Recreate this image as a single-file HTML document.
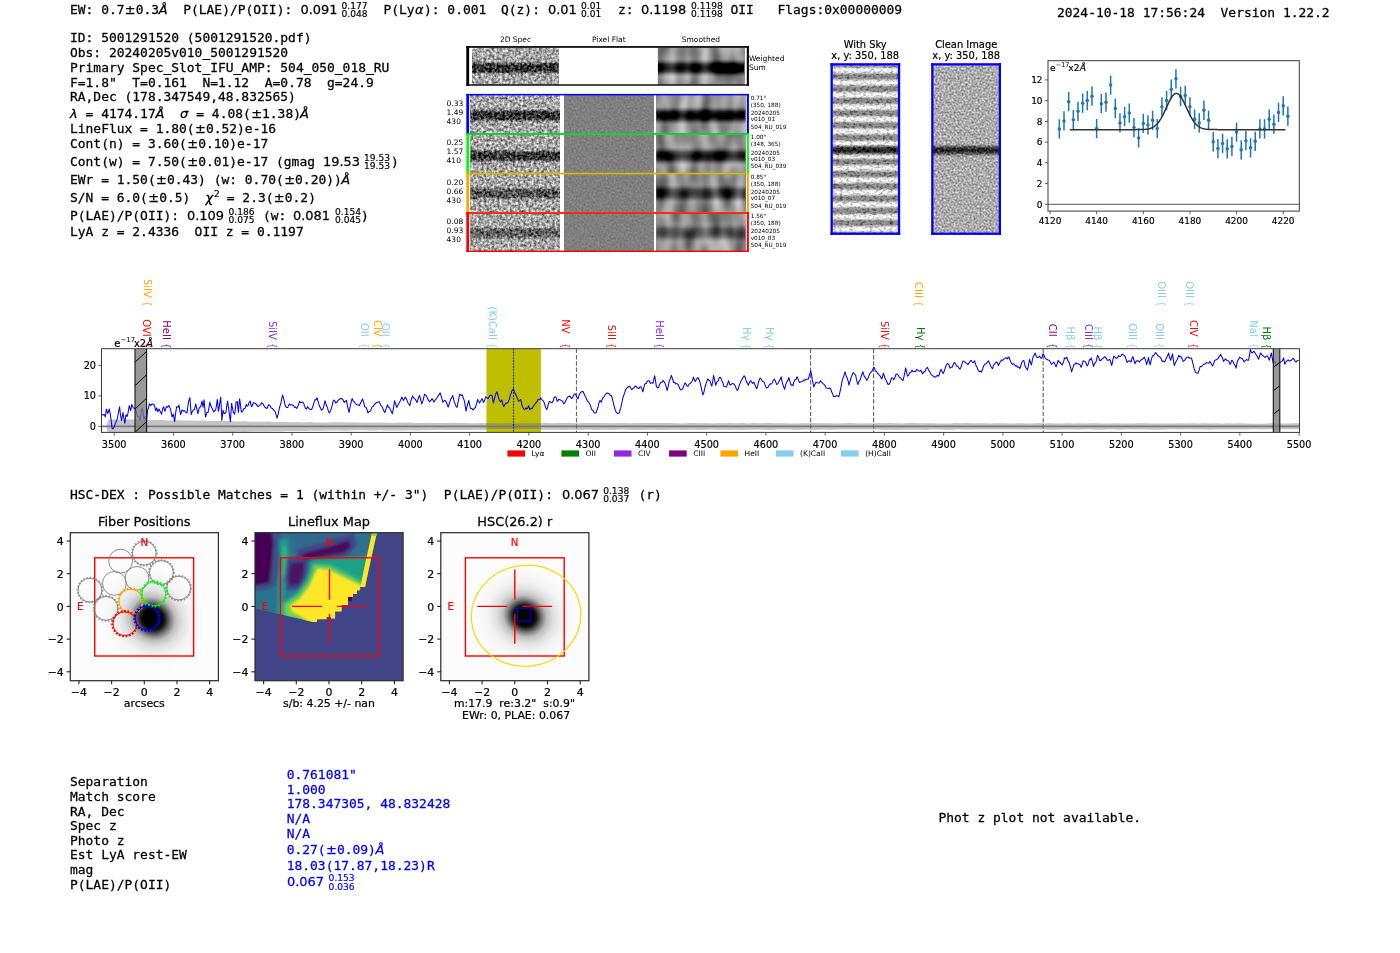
<!DOCTYPE html>
<html lang="en"><head><meta charset="utf-8"><title>HETDEX detection report 5001291520</title>
<style>
html,body{margin:0;padding:0;background:#fff;}
body{width:1400px;height:953px;overflow:hidden;font-family:"DejaVu Sans Mono","Liberation Mono",monospace;}
svg{display:block;will-change:transform;}
text{white-space:pre;}
.m{font-family:"DejaVu Sans Mono","Liberation Mono",monospace;font-size:12.95px;}
.s{font-family:"DejaVu Sans","Liberation Sans",sans-serif;font-size:12.95px;}
.i{font-style:italic;}
</style></head><body>
<svg width="1400" height="953" viewBox="0 0 1400 953" xml:space="preserve">
<text><tspan class="m" x="70.00" y="14.00" stroke="#000" stroke-width="0.26">EW: 0.7</tspan><tspan class="s" x="124.87" y="14.00" stroke="#000" stroke-width="0.26">±</tspan><tspan class="m" x="135.77" y="14.00" stroke="#000" stroke-width="0.26">0.3</tspan><tspan class="s i" x="158.70" y="14.00" stroke="#000" stroke-width="0.26">Å  </tspan><tspan class="m" x="183.20" y="14.00" stroke="#000" stroke-width="0.26">P(LAE)/P(OII): </tspan><tspan class="s" x="300.50" y="14.00" stroke="#000" stroke-width="0.26">0.091</tspan><tspan class="s" x="341.50" y="9.00" style="font-size:9.1px" stroke="#000" stroke-width="0.18">0.177 </tspan><tspan class="s" x="341.50" y="17.20" style="font-size:9.1px" stroke="#000" stroke-width="0.18">0.048  </tspan><tspan class="m" x="383.50" y="14.00" stroke="#000" stroke-width="0.26">P(Ly</tspan><tspan class="s i" x="415.00" y="14.00" stroke="#000" stroke-width="0.26">α</tspan><tspan class="m" x="424.00" y="14.00" stroke="#000" stroke-width="0.26">): 0.001  </tspan><tspan class="m" x="501.00" y="14.00" stroke="#000" stroke-width="0.26">Q(z): </tspan><tspan class="s" x="548.00" y="14.00" stroke="#000" stroke-width="0.26">0.01</tspan><tspan class="s" x="581.00" y="9.00" style="font-size:9.1px" stroke="#000" stroke-width="0.18">0.01 </tspan><tspan class="s" x="581.00" y="17.20" style="font-size:9.1px" stroke="#000" stroke-width="0.18">0.01  </tspan><tspan class="m" x="618.00" y="14.00" stroke="#000" stroke-width="0.26">z: </tspan><tspan class="s" x="641.00" y="14.00" stroke="#000" stroke-width="0.26">0.1198</tspan><tspan class="s" x="691.00" y="9.00" style="font-size:9.1px" stroke="#000" stroke-width="0.18">0.1198 </tspan><tspan class="s" x="691.00" y="17.20" style="font-size:9.1px" stroke="#000" stroke-width="0.18">0.1198 </tspan><tspan class="m" x="730.50" y="14.00" stroke="#000" stroke-width="0.26">OII   </tspan><tspan class="m" x="777.50" y="14.00" stroke="#000" stroke-width="0.26">Flags:0x00000009</tspan></text>
<text class="m" x="1057.00" y="17.00" stroke="#000" stroke-width="0.26">2024-10-18 17:56:24  Version 1.22.2</text>
<text class="m" x="70.00" y="42.30" stroke="#000" stroke-width="0.26">ID: 5001291520 (5001291520.pdf)</text>
<text class="m" x="70.00" y="56.70" stroke="#000" stroke-width="0.26">Obs: 20240205v010_5001291520</text>
<text class="m" x="70.00" y="71.70" stroke="#000" stroke-width="0.26">Primary Spec_Slot_IFU_AMP: 504_050_018_RU</text>
<text class="m" x="70.00" y="86.60" stroke="#000" stroke-width="0.26">F=1.8"  T=0.161  N=1.12  A=0.78  g=24.9</text>
<text class="m" x="70.00" y="101.10" stroke="#000" stroke-width="0.26">RA,Dec (178.347549,48.832565)</text>
<text><tspan class="s i" x="70.00" y="118.00" stroke="#000" stroke-width="0.26">λ</tspan><tspan class="m" x="77.80" y="118.00" stroke="#000" stroke-width="0.26"> = 4174.17</tspan><tspan class="s i" x="155.60" y="118.00" stroke="#000" stroke-width="0.26">Å  </tspan><tspan class="s i" x="180.00" y="118.00" stroke="#000" stroke-width="0.26">σ</tspan><tspan class="m" x="188.50" y="118.00" stroke="#000" stroke-width="0.26"> = 4.08(</tspan><tspan class="s" x="251.17" y="118.00" stroke="#000" stroke-width="0.26">±</tspan><tspan class="m" x="262.06" y="118.00" stroke="#000" stroke-width="0.26">1.38)</tspan><tspan class="s i" x="300.00" y="118.00" stroke="#000" stroke-width="0.26">Å</tspan></text>
<text><tspan class="m" x="70.00" y="133.30" stroke="#000" stroke-width="0.26">LineFlux = 1.80(</tspan><tspan class="s" x="195.03" y="133.30" stroke="#000" stroke-width="0.26">±</tspan><tspan class="m" x="205.93" y="133.30" stroke="#000" stroke-width="0.26">0.52)e-16</tspan></text>
<text><tspan class="m" x="70.00" y="148.00" stroke="#000" stroke-width="0.26">Cont(n) = 3.60(</tspan><tspan class="s" x="187.24" y="148.00" stroke="#000" stroke-width="0.26">±</tspan><tspan class="m" x="198.13" y="148.00" stroke="#000" stroke-width="0.26">0.10)e-17</tspan></text>
<text><tspan class="m" x="70.00" y="166.20" stroke="#000" stroke-width="0.26">Cont(w) = 7.50(</tspan><tspan class="s" x="187.24" y="166.20" stroke="#000" stroke-width="0.26">±</tspan><tspan class="m" x="198.13" y="166.20" stroke="#000" stroke-width="0.26">0.01)e-17 (gmag </tspan><tspan class="s" x="323.00" y="166.20" stroke="#000" stroke-width="0.26">19.53</tspan><tspan class="s" x="364.00" y="161.20" style="font-size:9.1px" stroke="#000" stroke-width="0.18">19.53 </tspan><tspan class="s" x="364.00" y="169.40" style="font-size:9.1px" stroke="#000" stroke-width="0.18">19.53</tspan><tspan class="m" x="391.00" y="166.20" stroke="#000" stroke-width="0.26">)</tspan></text>
<text><tspan class="m" x="70.00" y="184.40" stroke="#000" stroke-width="0.26">EWr = 1.50(</tspan><tspan class="s" x="156.05" y="184.40" stroke="#000" stroke-width="0.26">±</tspan><tspan class="m" x="166.95" y="184.40" stroke="#000" stroke-width="0.26">0.43) (w: 0.70(</tspan><tspan class="s" x="284.19" y="184.40" stroke="#000" stroke-width="0.26">±</tspan><tspan class="m" x="295.09" y="184.40" stroke="#000" stroke-width="0.26">0.20))</tspan><tspan class="s i" x="341.20" y="184.40" stroke="#000" stroke-width="0.26">Å</tspan></text>
<text><tspan class="m" x="70.00" y="202.00" stroke="#000" stroke-width="0.26">S/N = 6.0(</tspan><tspan class="s" x="148.26" y="202.00" stroke="#000" stroke-width="0.26">±</tspan><tspan class="m" x="159.15" y="202.00" stroke="#000" stroke-width="0.26">0.5)  </tspan><tspan class="s i" x="205.60" y="202.00" stroke="#000" stroke-width="0.26">χ</tspan><tspan class="s" x="214.00" y="197.00" style="font-size:9.1px" stroke="#000" stroke-width="0.18">2</tspan><tspan class="m" x="219.00" y="202.00" stroke="#000" stroke-width="0.26"> = 2.3(</tspan><tspan class="s" x="273.87" y="202.00" stroke="#000" stroke-width="0.26">±</tspan><tspan class="m" x="284.77" y="202.00" stroke="#000" stroke-width="0.26">0.2)</tspan></text>
<text><tspan class="m" x="70.00" y="219.60" stroke="#000" stroke-width="0.26">P(LAE)/P(OII): </tspan><tspan class="s" x="187.00" y="219.60" stroke="#000" stroke-width="0.26">0.109</tspan><tspan class="s" x="228.50" y="214.60" style="font-size:9.1px" stroke="#000" stroke-width="0.18">0.186 </tspan><tspan class="s" x="228.50" y="222.80" style="font-size:9.1px" stroke="#000" stroke-width="0.18">0.075 </tspan><tspan class="m" x="263.00" y="219.60" stroke="#000" stroke-width="0.26">(w: </tspan><tspan class="s" x="293.00" y="219.60" stroke="#000" stroke-width="0.26">0.081</tspan><tspan class="s" x="335.00" y="214.60" style="font-size:9.1px" stroke="#000" stroke-width="0.18">0.154 </tspan><tspan class="s" x="335.00" y="222.80" style="font-size:9.1px" stroke="#000" stroke-width="0.18">0.045</tspan><tspan class="m" x="361.00" y="219.60" stroke="#000" stroke-width="0.26">)</tspan></text>
<text class="m" x="70.00" y="236.00" stroke="#000" stroke-width="0.26">LyA z = 2.4336  OII z = 0.1197</text>
<defs>
<filter id="fn0" x="0" y="0" width="100%" height="100%" color-interpolation-filters="sRGB"><feTurbulence type="fractalNoise" baseFrequency="0.38 0.38" numOctaves="2" seed="3"/><feColorMatrix type="matrix" values="1.15 0 0 0 0.075  1.15 0 0 0 0.075  1.15 0 0 0 0.075  0 0 0 0 1" result="n"/><feComposite in="n" in2="SourceGraphic" operator="arithmetic" k1="0" k2="1" k3="1" k4="-1"/></filter>
<filter id="fn1" x="0" y="0" width="100%" height="100%" color-interpolation-filters="sRGB"><feTurbulence type="fractalNoise" baseFrequency="0.38 0.38" numOctaves="2" seed="11"/><feColorMatrix type="matrix" values="1.15 0 0 0 0.075  1.15 0 0 0 0.075  1.15 0 0 0 0.075  0 0 0 0 1" result="n"/><feComposite in="n" in2="SourceGraphic" operator="arithmetic" k1="0" k2="1" k3="1" k4="-1"/></filter>
<filter id="fn2" x="0" y="0" width="100%" height="100%" color-interpolation-filters="sRGB"><feTurbulence type="fractalNoise" baseFrequency="0.38 0.38" numOctaves="2" seed="17"/><feColorMatrix type="matrix" values="1.15 0 0 0 0.075  1.15 0 0 0 0.075  1.15 0 0 0 0.075  0 0 0 0 1" result="n"/><feComposite in="n" in2="SourceGraphic" operator="arithmetic" k1="0" k2="1" k3="1" k4="-1"/></filter>
<filter id="fn3" x="0" y="0" width="100%" height="100%" color-interpolation-filters="sRGB"><feTurbulence type="fractalNoise" baseFrequency="0.38 0.38" numOctaves="2" seed="23"/><feColorMatrix type="matrix" values="1.15 0 0 0 0.075  1.15 0 0 0 0.075  1.15 0 0 0 0.075  0 0 0 0 1" result="n"/><feComposite in="n" in2="SourceGraphic" operator="arithmetic" k1="0" k2="1" k3="1" k4="-1"/></filter>
<filter id="fn4" x="0" y="0" width="100%" height="100%" color-interpolation-filters="sRGB"><feTurbulence type="fractalNoise" baseFrequency="0.38 0.38" numOctaves="2" seed="29"/><feColorMatrix type="matrix" values="1.15 0 0 0 0.075  1.15 0 0 0 0.075  1.15 0 0 0 0.075  0 0 0 0 1" result="n"/><feComposite in="n" in2="SourceGraphic" operator="arithmetic" k1="0" k2="1" k3="1" k4="-1"/></filter>
<filter id="fs0" x="0" y="0" width="100%" height="100%" color-interpolation-filters="sRGB"><feTurbulence type="fractalNoise" baseFrequency="0.09 0.035" numOctaves="1" seed="5"/><feColorMatrix type="matrix" values="0.85 0 0 0 0.15  0.85 0 0 0 0.15  0.85 0 0 0 0.15  0 0 0 0 1" result="n"/><feComposite in="n" in2="SourceGraphic" operator="arithmetic" k1="0" k2="1" k3="1" k4="-1"/></filter>
<filter id="fs1" x="0" y="0" width="100%" height="100%" color-interpolation-filters="sRGB"><feTurbulence type="fractalNoise" baseFrequency="0.09 0.035" numOctaves="1" seed="8"/><feColorMatrix type="matrix" values="0.85 0 0 0 0.15  0.85 0 0 0 0.15  0.85 0 0 0 0.15  0 0 0 0 1" result="n"/><feComposite in="n" in2="SourceGraphic" operator="arithmetic" k1="0" k2="1" k3="1" k4="-1"/></filter>
<filter id="fs2" x="0" y="0" width="100%" height="100%" color-interpolation-filters="sRGB"><feTurbulence type="fractalNoise" baseFrequency="0.09 0.035" numOctaves="1" seed="13"/><feColorMatrix type="matrix" values="0.85 0 0 0 0.15  0.85 0 0 0 0.15  0.85 0 0 0 0.15  0 0 0 0 1" result="n"/><feComposite in="n" in2="SourceGraphic" operator="arithmetic" k1="0" k2="1" k3="1" k4="-1"/></filter>
<filter id="fs3" x="0" y="0" width="100%" height="100%" color-interpolation-filters="sRGB"><feTurbulence type="fractalNoise" baseFrequency="0.09 0.035" numOctaves="1" seed="19"/><feColorMatrix type="matrix" values="0.85 0 0 0 0.15  0.85 0 0 0 0.15  0.85 0 0 0 0.15  0 0 0 0 1" result="n"/><feComposite in="n" in2="SourceGraphic" operator="arithmetic" k1="0" k2="1" k3="1" k4="-1"/></filter>
<filter id="fs4" x="0" y="0" width="100%" height="100%" color-interpolation-filters="sRGB"><feTurbulence type="fractalNoise" baseFrequency="0.09 0.035" numOctaves="1" seed="27"/><feColorMatrix type="matrix" values="0.85 0 0 0 0.15  0.85 0 0 0 0.15  0.85 0 0 0 0.15  0 0 0 0 1" result="n"/><feComposite in="n" in2="SourceGraphic" operator="arithmetic" k1="0" k2="1" k3="1" k4="-1"/></filter>
<filter id="ff" x="0" y="0" width="100%" height="100%" color-interpolation-filters="sRGB"><feTurbulence type="fractalNoise" baseFrequency="0.5 0.5" numOctaves="1" seed="7"/><feColorMatrix type="matrix" values="0.22 0 0 0 0.39  0.22 0 0 0 0.39  0.22 0 0 0 0.39  0 0 0 0 1" result="n"/><feComposite in="n" in2="SourceGraphic" operator="arithmetic" k1="0" k2="1" k3="1" k4="-1"/></filter>
<filter id="fc" x="0" y="0" width="100%" height="100%" color-interpolation-filters="sRGB"><feTurbulence type="fractalNoise" baseFrequency="0.5 0.5" numOctaves="2" seed="21"/><feColorMatrix type="matrix" values="0.75 0 0 0 0.3  0.75 0 0 0 0.3  0.75 0 0 0 0.3  0 0 0 0 1" result="n"/><feComposite in="n" in2="SourceGraphic" operator="arithmetic" k1="0" k2="1" k3="1" k4="-1"/></filter>
<filter id="fk" x="0" y="0" width="100%" height="100%" color-interpolation-filters="sRGB"><feTurbulence type="fractalNoise" baseFrequency="0.3 0.45" numOctaves="2" seed="31"/><feColorMatrix type="matrix" values="0.9 0 0 0 0.5  0.9 0 0 0 0.5  0.9 0 0 0 0.5  0 0 0 0 1" result="n"/><feComposite in="n" in2="SourceGraphic" operator="arithmetic" k1="0" k2="1" k3="1" k4="-1"/></filter>
</defs>
<text class="s" x="515.50" y="41.90" text-anchor="middle" style="font-size:7.5px">2D Spec</text>
<text class="s" x="608.80" y="41.90" text-anchor="middle" style="font-size:7.5px">Pixel Flat</text>
<text class="s" x="700.90" y="41.90" text-anchor="middle" style="font-size:7.5px">Smoothed</text>
<linearGradient id="bg1" x1="0" y1="0" x2="0" y2="1"><stop offset="0.362" stop-color="#ffffff"/><stop offset="0.395" stop-color="#e2e2e2"/><stop offset="0.440" stop-color="#a1a1a1"/><stop offset="0.482" stop-color="#8a8a8a"/><stop offset="0.614" stop-color="#8a8a8a"/><stop offset="0.656" stop-color="#a1a1a1"/><stop offset="0.701" stop-color="#e2e2e2"/><stop offset="0.734" stop-color="#ffffff"/></linearGradient>
<rect x="472.00" y="47.90" width="86.70" height="36.50" fill="url(#bg1)" filter="url(#fn0)"/>
<linearGradient id="bg2" x1="0" y1="0" x2="0" y2="1"><stop offset="0.301" stop-color="#ffffff"/><stop offset="0.365" stop-color="#d5d5d5"/><stop offset="0.451" stop-color="#787878"/><stop offset="0.532" stop-color="#575757"/><stop offset="0.564" stop-color="#575757"/><stop offset="0.645" stop-color="#787878"/><stop offset="0.731" stop-color="#d5d5d5"/><stop offset="0.795" stop-color="#ffffff"/></linearGradient>
<rect x="657.90" y="47.90" width="86.70" height="36.50" fill="url(#bg2)" filter="url(#fs0)"/>
<rect x="466.30" y="46.10" width="2.80" height="39.60" fill="#000"/>
<rect x="746.80" y="46.10" width="2.10" height="39.60" fill="#000"/>
<rect x="466.30" y="46.10" width="282.60" height="1.70" fill="#000"/>
<rect x="466.30" y="84.30" width="282.60" height="1.40" fill="#000"/>
<text class="s" x="748.90" y="60.70" style="font-size:7.5px">Weighted</text>
<text class="s" x="748.90" y="69.80" style="font-size:7.5px">Sum</text>
<linearGradient id="bg3" x1="0" y1="0" x2="0" y2="1"><stop offset="0.355" stop-color="#ffffff"/><stop offset="0.387" stop-color="#e2e2e2"/><stop offset="0.430" stop-color="#a1a1a1"/><stop offset="0.470" stop-color="#8a8a8a"/><stop offset="0.597" stop-color="#8a8a8a"/><stop offset="0.637" stop-color="#a1a1a1"/><stop offset="0.680" stop-color="#e2e2e2"/><stop offset="0.712" stop-color="#ffffff"/></linearGradient>
<rect x="470.40" y="95.10" width="89.60" height="38.05" fill="url(#bg3)" filter="url(#fn1)"/>
<rect x="564.00" y="95.10" width="89.80" height="38.05" fill="#fff" filter="url(#ff)"/>
<linearGradient id="bg4" x1="0" y1="0" x2="0" y2="1"><stop offset="0.297" stop-color="#ffffff"/><stop offset="0.358" stop-color="#d7d7d7"/><stop offset="0.440" stop-color="#818181"/><stop offset="0.518" stop-color="#616161"/><stop offset="0.549" stop-color="#616161"/><stop offset="0.627" stop-color="#818181"/><stop offset="0.709" stop-color="#d7d7d7"/><stop offset="0.770" stop-color="#ffffff"/></linearGradient>
<rect x="656.20" y="95.10" width="89.40" height="38.05" fill="url(#bg4)" filter="url(#fs1)"/>
<linearGradient id="bg5" x1="0" y1="0" x2="0" y2="1"><stop offset="0.385" stop-color="#ffffff"/><stop offset="0.417" stop-color="#e3e3e3"/><stop offset="0.460" stop-color="#a5a5a5"/><stop offset="0.501" stop-color="#8f8f8f"/><stop offset="0.627" stop-color="#8f8f8f"/><stop offset="0.667" stop-color="#a5a5a5"/><stop offset="0.711" stop-color="#e3e3e3"/><stop offset="0.742" stop-color="#ffffff"/></linearGradient>
<rect x="470.40" y="134.55" width="89.60" height="38.05" fill="url(#bg5)" filter="url(#fn2)"/>
<rect x="564.00" y="134.55" width="89.80" height="38.05" fill="#fff" filter="url(#ff)"/>
<linearGradient id="bg6" x1="0" y1="0" x2="0" y2="1"><stop offset="0.327" stop-color="#ffffff"/><stop offset="0.388" stop-color="#dbdbdb"/><stop offset="0.471" stop-color="#8d8d8d"/><stop offset="0.548" stop-color="#707070"/><stop offset="0.580" stop-color="#707070"/><stop offset="0.657" stop-color="#8d8d8d"/><stop offset="0.740" stop-color="#dbdbdb"/><stop offset="0.800" stop-color="#ffffff"/></linearGradient>
<rect x="656.20" y="134.55" width="89.40" height="38.05" fill="url(#bg6)" filter="url(#fs2)"/>
<linearGradient id="bg7" x1="0" y1="0" x2="0" y2="1"><stop offset="0.334" stop-color="#ffffff"/><stop offset="0.366" stop-color="#eaeaea"/><stop offset="0.409" stop-color="#bcbcbc"/><stop offset="0.449" stop-color="#ababab"/><stop offset="0.576" stop-color="#ababab"/><stop offset="0.616" stop-color="#bcbcbc"/><stop offset="0.659" stop-color="#eaeaea"/><stop offset="0.691" stop-color="#ffffff"/></linearGradient>
<rect x="470.40" y="174.00" width="89.60" height="38.05" fill="url(#bg7)" filter="url(#fn3)"/>
<rect x="564.00" y="174.00" width="89.80" height="38.05" fill="#fff" filter="url(#ff)"/>
<linearGradient id="bg8" x1="0" y1="0" x2="0" y2="1"><stop offset="0.276" stop-color="#ffffff"/><stop offset="0.337" stop-color="#e6e6e6"/><stop offset="0.419" stop-color="#adadad"/><stop offset="0.497" stop-color="#999999"/><stop offset="0.528" stop-color="#999999"/><stop offset="0.606" stop-color="#adadad"/><stop offset="0.688" stop-color="#e6e6e6"/><stop offset="0.749" stop-color="#ffffff"/></linearGradient>
<rect x="656.20" y="174.00" width="89.40" height="38.05" fill="url(#bg8)" filter="url(#fs3)"/>
<linearGradient id="bg9" x1="0" y1="0" x2="0" y2="1"><stop offset="0.335" stop-color="#ffffff"/><stop offset="0.367" stop-color="#eeeeee"/><stop offset="0.410" stop-color="#c8c8c8"/><stop offset="0.451" stop-color="#bababa"/><stop offset="0.577" stop-color="#bababa"/><stop offset="0.617" stop-color="#c8c8c8"/><stop offset="0.661" stop-color="#eeeeee"/><stop offset="0.693" stop-color="#ffffff"/></linearGradient>
<rect x="470.40" y="213.45" width="89.60" height="38.05" fill="url(#bg9)" filter="url(#fn4)"/>
<rect x="564.00" y="213.45" width="89.80" height="38.05" fill="#fff" filter="url(#ff)"/>
<linearGradient id="bg10" x1="0" y1="0" x2="0" y2="1"><stop offset="0.277" stop-color="#ffffff"/><stop offset="0.338" stop-color="#ececec"/><stop offset="0.421" stop-color="#c2c2c2"/><stop offset="0.498" stop-color="#b2b2b2"/><stop offset="0.530" stop-color="#b2b2b2"/><stop offset="0.607" stop-color="#c2c2c2"/><stop offset="0.690" stop-color="#ececec"/><stop offset="0.750" stop-color="#ffffff"/></linearGradient>
<rect x="656.20" y="213.45" width="89.40" height="38.05" fill="url(#bg10)" filter="url(#fs4)"/>
<rect x="466.30" y="93.90" width="2.80" height="40.85" fill="#0000ff"/>
<rect x="746.80" y="93.90" width="2.10" height="40.85" fill="#0000ff"/>
<rect x="466.30" y="93.90" width="282.60" height="1.50" fill="#0000ff"/>
<rect x="466.30" y="133.35" width="282.60" height="1.40" fill="#0000ff"/>
<text class="s" x="446.60" y="105.60" style="font-size:7.5px">0.33</text>
<text class="s" x="446.60" y="114.60" style="font-size:7.5px">1.49</text>
<text class="s" x="446.60" y="123.60" style="font-size:7.5px">430</text>
<text class="s" x="750.70" y="99.60" style="font-size:5.72px">0.71"</text>
<text class="s" x="750.70" y="106.80" style="font-size:5.72px">(350, 188)</text>
<text class="s" x="750.70" y="115.10" style="font-size:5.72px">20240205</text>
<text class="s" x="750.70" y="121.40" style="font-size:5.72px">v010_01</text>
<text class="s" x="750.70" y="128.90" style="font-size:5.72px">504_RU_019</text>
<rect x="466.30" y="133.35" width="2.80" height="40.85" fill="#00ff00"/>
<rect x="746.80" y="133.35" width="2.10" height="40.85" fill="#00ff00"/>
<rect x="466.30" y="133.35" width="282.60" height="1.50" fill="#00ff00"/>
<rect x="466.30" y="172.80" width="282.60" height="1.40" fill="#00ff00"/>
<text class="s" x="446.60" y="145.05" style="font-size:7.5px">0.25</text>
<text class="s" x="446.60" y="154.05" style="font-size:7.5px">1.57</text>
<text class="s" x="446.60" y="163.05" style="font-size:7.5px">410</text>
<text class="s" x="750.70" y="139.05" style="font-size:5.72px">1.00"</text>
<text class="s" x="750.70" y="146.25" style="font-size:5.72px">(348, 365)</text>
<text class="s" x="750.70" y="154.55" style="font-size:5.72px">20240205</text>
<text class="s" x="750.70" y="160.85" style="font-size:5.72px">v010_03</text>
<text class="s" x="750.70" y="168.35" style="font-size:5.72px">504_RU_039</text>
<rect x="466.30" y="172.80" width="2.80" height="40.85" fill="#ffa500"/>
<rect x="746.80" y="172.80" width="2.10" height="40.85" fill="#ffa500"/>
<rect x="466.30" y="172.80" width="282.60" height="1.50" fill="#ffa500"/>
<rect x="466.30" y="212.25" width="282.60" height="1.40" fill="#ffa500"/>
<text class="s" x="446.60" y="184.50" style="font-size:7.5px">0.20</text>
<text class="s" x="446.60" y="193.50" style="font-size:7.5px">0.66</text>
<text class="s" x="446.60" y="202.50" style="font-size:7.5px">430</text>
<text class="s" x="750.70" y="178.50" style="font-size:5.72px">0.85"</text>
<text class="s" x="750.70" y="185.70" style="font-size:5.72px">(350, 188)</text>
<text class="s" x="750.70" y="194.00" style="font-size:5.72px">20240205</text>
<text class="s" x="750.70" y="200.30" style="font-size:5.72px">v010_07</text>
<text class="s" x="750.70" y="207.80" style="font-size:5.72px">504_RU_019</text>
<rect x="466.30" y="212.25" width="2.80" height="39.75" fill="#ff0000"/>
<rect x="746.80" y="212.25" width="2.10" height="39.75" fill="#ff0000"/>
<rect x="466.30" y="212.25" width="282.60" height="1.50" fill="#ff0000"/>
<rect x="466.30" y="250.60" width="282.60" height="1.40" fill="#ff0000"/>
<text class="s" x="446.60" y="223.95" style="font-size:7.5px">0.08</text>
<text class="s" x="446.60" y="232.95" style="font-size:7.5px">0.93</text>
<text class="s" x="446.60" y="241.95" style="font-size:7.5px">430</text>
<text class="s" x="750.70" y="217.95" style="font-size:5.72px">1.56"</text>
<text class="s" x="750.70" y="225.15" style="font-size:5.72px">(350, 188)</text>
<text class="s" x="750.70" y="233.45" style="font-size:5.72px">20240205</text>
<text class="s" x="750.70" y="239.75" style="font-size:5.72px">v010_03</text>
<text class="s" x="750.70" y="247.25" style="font-size:5.72px">504_RU_019</text>
<text class="s" x="865.20" y="47.80" text-anchor="middle" style="font-size:9.9px" stroke="#000" stroke-width="0.20">With Sky</text>
<text class="s" x="865.20" y="58.70" text-anchor="middle" style="font-size:9.9px" stroke="#000" stroke-width="0.20">x, y: 350, 188</text>
<text class="s" x="966.20" y="47.80" text-anchor="middle" style="font-size:9.9px" stroke="#000" stroke-width="0.20">Clean Image</text>
<text class="s" x="966.20" y="58.70" text-anchor="middle" style="font-size:9.9px" stroke="#000" stroke-width="0.20">x, y: 350, 188</text>
<linearGradient id="stripe" gradientUnits="userSpaceOnUse" x1="0" y1="70.40" x2="0" y2="82.60" spreadMethod="repeat"><stop offset="0" stop-color="#fff"/><stop offset="0.14" stop-color="#f4f4f4"/><stop offset="0.36" stop-color="#949494"/><stop offset="0.64" stop-color="#949494"/><stop offset="0.86" stop-color="#f4f4f4"/><stop offset="1" stop-color="#fff"/></linearGradient>
<linearGradient id="eband" x1="0" y1="0" x2="0" y2="1"><stop offset="0" stop-color="#000" stop-opacity="0"/><stop offset="0.3" stop-color="#000" stop-opacity="0.55"/><stop offset="0.5" stop-color="#000" stop-opacity="0.7"/><stop offset="0.7" stop-color="#000" stop-opacity="0.55"/><stop offset="1" stop-color="#000" stop-opacity="0"/></linearGradient>
<g filter="url(#fk)">
<rect x="832.50" y="65.30" width="65.70" height="167.70" fill="url(#stripe)"/>
<rect x="832.50" y="144.30" width="65.70" height="12.00" fill="url(#eband)"/>
</g>
<rect x="830.50" y="63.20" width="2.30" height="171.70" fill="#0000ff"/>
<rect x="897.90" y="63.20" width="2.30" height="171.70" fill="#0000ff"/>
<rect x="830.50" y="63.20" width="69.70" height="2.30" fill="#0000ff"/>
<rect x="830.50" y="232.60" width="69.70" height="2.30" fill="#0000ff"/>
<g filter="url(#fc)">
<rect x="933.00" y="65.30" width="66.20" height="167.70" fill="#fff"/>
<rect x="933.00" y="144.30" width="66.20" height="12.00" fill="url(#eband)" opacity="0.8"/>
</g>
<rect x="931.20" y="63.20" width="2.30" height="171.70" fill="#0000ff"/>
<rect x="998.70" y="63.20" width="2.30" height="171.70" fill="#0000ff"/>
<rect x="931.20" y="63.20" width="69.80" height="2.30" fill="#0000ff"/>
<rect x="931.20" y="232.60" width="69.80" height="2.30" fill="#0000ff"/>
<rect x="1048.00" y="60.70" width="251.30" height="150.40" fill="#fff" stroke="none"/>
<line x1="1048.00" y1="204.30" x2="1299.30" y2="204.30" stroke="#555" stroke-width="1"/>
<path d="M1059.33 119.27V138.55M1063.99 111.28V130.57M1068.66 91.99V111.28M1073.32 110.04V129.32M1077.98 101.64V120.93M1082.65 93.55V112.84M1087.31 90.96V110.24M1091.98 86.50V105.79M1096.64 118.95V138.24M1101.30 94.07V113.36M1105.97 92.51V111.80M1110.63 75.40V94.69M1115.30 98.84V118.13M1119.96 113.25V132.54M1124.62 107.03V126.32M1129.29 103.40V122.69M1133.95 117.92V137.21M1138.62 128.29V147.58M1143.28 113.77V133.06M1147.94 115.33V134.61M1152.61 110.66V129.95M1157.27 118.95V138.24M1161.94 97.18V116.47M1166.60 90.96V110.24M1171.26 79.55V98.84M1175.93 69.18V88.47M1180.59 86.81V106.10M1185.26 85.77V105.06M1189.92 97.18V116.47M1194.58 109.62V128.91M1199.25 113.25V132.54M1203.91 100.60V119.89M1208.58 110.66V129.95M1213.24 132.12V151.41M1217.90 138.97V158.26M1222.57 133.78V153.07M1227.23 139.18V158.46M1231.90 136.79V156.08M1236.56 122.48V141.77M1241.22 140.21V159.50M1245.89 130.98V150.27M1250.55 138.14V157.43M1255.22 131.71V151.00M1259.88 119.27V138.55M1264.54 119.27V138.55M1269.21 109.62V128.91M1273.87 114.50V133.78M1278.54 102.78V122.07M1283.20 96.14V115.43M1287.86 106.51V125.80" stroke="#1f77b4" stroke-width="1.5" fill="none"/>
<circle cx="1059.33" cy="128.91" r="1.75" fill="#1f77b4"/>
<circle cx="1063.99" cy="120.93" r="1.75" fill="#1f77b4"/>
<circle cx="1068.66" cy="101.64" r="1.75" fill="#1f77b4"/>
<circle cx="1073.32" cy="119.68" r="1.75" fill="#1f77b4"/>
<circle cx="1077.98" cy="111.28" r="1.75" fill="#1f77b4"/>
<circle cx="1082.65" cy="103.19" r="1.75" fill="#1f77b4"/>
<circle cx="1087.31" cy="100.60" r="1.75" fill="#1f77b4"/>
<circle cx="1091.98" cy="96.14" r="1.75" fill="#1f77b4"/>
<circle cx="1096.64" cy="128.60" r="1.75" fill="#1f77b4"/>
<circle cx="1101.30" cy="103.71" r="1.75" fill="#1f77b4"/>
<circle cx="1105.97" cy="102.16" r="1.75" fill="#1f77b4"/>
<circle cx="1110.63" cy="85.05" r="1.75" fill="#1f77b4"/>
<circle cx="1115.30" cy="108.48" r="1.75" fill="#1f77b4"/>
<circle cx="1119.96" cy="122.90" r="1.75" fill="#1f77b4"/>
<circle cx="1124.62" cy="116.67" r="1.75" fill="#1f77b4"/>
<circle cx="1129.29" cy="113.04" r="1.75" fill="#1f77b4"/>
<circle cx="1133.95" cy="127.56" r="1.75" fill="#1f77b4"/>
<circle cx="1138.62" cy="137.93" r="1.75" fill="#1f77b4"/>
<circle cx="1143.28" cy="123.41" r="1.75" fill="#1f77b4"/>
<circle cx="1147.94" cy="124.97" r="1.75" fill="#1f77b4"/>
<circle cx="1152.61" cy="120.30" r="1.75" fill="#1f77b4"/>
<circle cx="1157.27" cy="128.60" r="1.75" fill="#1f77b4"/>
<circle cx="1161.94" cy="106.82" r="1.75" fill="#1f77b4"/>
<circle cx="1166.60" cy="100.60" r="1.75" fill="#1f77b4"/>
<circle cx="1171.26" cy="89.19" r="1.75" fill="#1f77b4"/>
<circle cx="1175.93" cy="78.82" r="1.75" fill="#1f77b4"/>
<circle cx="1180.59" cy="96.45" r="1.75" fill="#1f77b4"/>
<circle cx="1185.26" cy="95.42" r="1.75" fill="#1f77b4"/>
<circle cx="1189.92" cy="106.82" r="1.75" fill="#1f77b4"/>
<circle cx="1194.58" cy="119.27" r="1.75" fill="#1f77b4"/>
<circle cx="1199.25" cy="122.90" r="1.75" fill="#1f77b4"/>
<circle cx="1203.91" cy="110.24" r="1.75" fill="#1f77b4"/>
<circle cx="1208.58" cy="120.30" r="1.75" fill="#1f77b4"/>
<circle cx="1213.24" cy="141.77" r="1.75" fill="#1f77b4"/>
<circle cx="1217.90" cy="148.61" r="1.75" fill="#1f77b4"/>
<circle cx="1222.57" cy="143.43" r="1.75" fill="#1f77b4"/>
<circle cx="1227.23" cy="148.82" r="1.75" fill="#1f77b4"/>
<circle cx="1231.90" cy="146.44" r="1.75" fill="#1f77b4"/>
<circle cx="1236.56" cy="132.12" r="1.75" fill="#1f77b4"/>
<circle cx="1241.22" cy="149.86" r="1.75" fill="#1f77b4"/>
<circle cx="1245.89" cy="140.63" r="1.75" fill="#1f77b4"/>
<circle cx="1250.55" cy="147.78" r="1.75" fill="#1f77b4"/>
<circle cx="1255.22" cy="141.35" r="1.75" fill="#1f77b4"/>
<circle cx="1259.88" cy="128.91" r="1.75" fill="#1f77b4"/>
<circle cx="1264.54" cy="128.91" r="1.75" fill="#1f77b4"/>
<circle cx="1269.21" cy="119.27" r="1.75" fill="#1f77b4"/>
<circle cx="1273.87" cy="124.14" r="1.75" fill="#1f77b4"/>
<circle cx="1278.54" cy="112.42" r="1.75" fill="#1f77b4"/>
<circle cx="1283.20" cy="105.79" r="1.75" fill="#1f77b4"/>
<circle cx="1287.86" cy="116.16" r="1.75" fill="#1f77b4"/>
<path d="M1069.82 129.64L1070.99 129.64L1072.15 129.64L1073.32 129.64L1074.49 129.64L1075.65 129.64L1076.82 129.64L1077.98 129.64L1079.15 129.64L1080.32 129.64L1081.48 129.64L1082.65 129.64L1083.81 129.64L1084.98 129.64L1086.15 129.64L1087.31 129.64L1088.48 129.64L1089.64 129.64L1090.81 129.64L1091.98 129.64L1093.14 129.64L1094.31 129.64L1095.47 129.64L1096.64 129.64L1097.81 129.64L1098.97 129.64L1100.14 129.64L1101.30 129.64L1102.47 129.64L1103.64 129.64L1104.80 129.64L1105.97 129.64L1107.13 129.64L1108.30 129.64L1109.47 129.64L1110.63 129.64L1111.80 129.64L1112.96 129.64L1114.13 129.64L1115.30 129.64L1116.46 129.64L1117.63 129.64L1118.79 129.64L1119.96 129.64L1121.13 129.64L1122.29 129.64L1123.46 129.64L1124.62 129.64L1125.79 129.64L1126.96 129.64L1128.12 129.64L1129.29 129.64L1130.45 129.63L1131.62 129.63L1132.79 129.63L1133.95 129.63L1135.12 129.63L1136.28 129.62L1137.45 129.62L1138.62 129.61L1139.78 129.59L1140.95 129.57L1142.11 129.53L1143.28 129.48L1144.45 129.41L1145.61 129.31L1146.78 129.17L1147.94 128.99L1149.11 128.74L1150.28 128.42L1151.44 127.99L1152.61 127.46L1153.77 126.79L1154.94 125.96L1156.11 124.95L1157.27 123.75L1158.44 122.33L1159.60 120.70L1160.77 118.86L1161.94 116.80L1163.10 114.56L1164.27 112.17L1165.43 109.66L1166.60 107.11L1167.77 104.57L1168.93 102.12L1170.10 99.83L1171.26 97.79L1172.43 96.07L1173.60 94.73L1174.76 93.82L1175.93 93.38L1177.09 93.43L1178.26 93.96L1179.43 94.96L1180.59 96.39L1181.76 98.18L1182.92 100.27L1184.09 102.60L1185.26 105.07L1186.42 107.62L1187.59 110.17L1188.75 112.66L1189.92 115.02L1191.09 117.23L1192.25 119.24L1193.42 121.05L1194.58 122.63L1195.75 124.00L1196.92 125.17L1198.08 126.14L1199.25 126.93L1200.41 127.58L1201.58 128.09L1202.75 128.49L1203.91 128.80L1205.08 129.03L1206.24 129.20L1207.41 129.33L1208.58 129.43L1209.74 129.49L1210.91 129.54L1212.07 129.57L1213.24 129.59L1214.41 129.61L1215.57 129.62L1216.74 129.62L1217.90 129.63L1219.07 129.63L1220.24 129.63L1221.40 129.63L1222.57 129.64L1223.73 129.64L1224.90 129.64L1226.07 129.64L1227.23 129.64L1228.40 129.64L1229.56 129.64L1230.73 129.64L1231.90 129.64L1233.06 129.64L1234.23 129.64L1235.39 129.64L1236.56 129.64L1237.73 129.64L1238.89 129.64L1240.06 129.64L1241.22 129.64L1242.39 129.64L1243.56 129.64L1244.72 129.64L1245.89 129.64L1247.05 129.64L1248.22 129.64L1249.39 129.64L1250.55 129.64L1251.72 129.64L1252.88 129.64L1254.05 129.64L1255.22 129.64L1256.38 129.64L1257.55 129.64L1258.71 129.64L1259.88 129.64L1261.05 129.64L1262.21 129.64L1263.38 129.64L1264.54 129.64L1265.71 129.64L1266.88 129.64L1268.04 129.64L1269.21 129.64L1270.37 129.64L1271.54 129.64L1272.71 129.64L1273.87 129.64L1275.04 129.64L1276.20 129.64L1277.37 129.64L1278.54 129.64L1279.70 129.64L1280.87 129.64L1282.03 129.64L1283.20 129.64L1284.37 129.64L1285.53 129.64" stroke="#333" stroke-width="1.5" fill="none" stroke-linejoin="round"/>
<rect x="1048.00" y="60.70" width="251.30" height="150.40" fill="none" stroke="#3a3a3a" stroke-width="1"/>
<line x1="1050.00" y1="211.10" x2="1050.00" y2="214.30" stroke="#3a3a3a" stroke-width="0.8"/>
<text class="s" x="1050.00" y="224.10" text-anchor="middle" style="font-size:8.95px" stroke="#000" stroke-width="0.18">4120</text>
<line x1="1096.64" y1="211.10" x2="1096.64" y2="214.30" stroke="#3a3a3a" stroke-width="0.8"/>
<text class="s" x="1096.64" y="224.10" text-anchor="middle" style="font-size:8.95px" stroke="#000" stroke-width="0.18">4140</text>
<line x1="1143.28" y1="211.10" x2="1143.28" y2="214.30" stroke="#3a3a3a" stroke-width="0.8"/>
<text class="s" x="1143.28" y="224.10" text-anchor="middle" style="font-size:8.95px" stroke="#000" stroke-width="0.18">4160</text>
<line x1="1189.92" y1="211.10" x2="1189.92" y2="214.30" stroke="#3a3a3a" stroke-width="0.8"/>
<text class="s" x="1189.92" y="224.10" text-anchor="middle" style="font-size:8.95px" stroke="#000" stroke-width="0.18">4180</text>
<line x1="1236.56" y1="211.10" x2="1236.56" y2="214.30" stroke="#3a3a3a" stroke-width="0.8"/>
<text class="s" x="1236.56" y="224.10" text-anchor="middle" style="font-size:8.95px" stroke="#000" stroke-width="0.18">4200</text>
<line x1="1283.20" y1="211.10" x2="1283.20" y2="214.30" stroke="#3a3a3a" stroke-width="0.8"/>
<text class="s" x="1283.20" y="224.10" text-anchor="middle" style="font-size:8.95px" stroke="#000" stroke-width="0.18">4220</text>
<line x1="1044.80" y1="204.30" x2="1048.00" y2="204.30" stroke="#3a3a3a" stroke-width="0.8"/>
<text class="s" x="1042.50" y="207.70" text-anchor="end" style="font-size:8.95px" stroke="#000" stroke-width="0.18">0</text>
<line x1="1044.80" y1="183.56" x2="1048.00" y2="183.56" stroke="#3a3a3a" stroke-width="0.8"/>
<text class="s" x="1042.50" y="186.96" text-anchor="end" style="font-size:8.95px" stroke="#000" stroke-width="0.18">2</text>
<line x1="1044.80" y1="162.82" x2="1048.00" y2="162.82" stroke="#3a3a3a" stroke-width="0.8"/>
<text class="s" x="1042.50" y="166.22" text-anchor="end" style="font-size:8.95px" stroke="#000" stroke-width="0.18">4</text>
<line x1="1044.80" y1="142.08" x2="1048.00" y2="142.08" stroke="#3a3a3a" stroke-width="0.8"/>
<text class="s" x="1042.50" y="145.48" text-anchor="end" style="font-size:8.95px" stroke="#000" stroke-width="0.18">6</text>
<line x1="1044.80" y1="121.34" x2="1048.00" y2="121.34" stroke="#3a3a3a" stroke-width="0.8"/>
<text class="s" x="1042.50" y="124.74" text-anchor="end" style="font-size:8.95px" stroke="#000" stroke-width="0.18">8</text>
<line x1="1044.80" y1="100.60" x2="1048.00" y2="100.60" stroke="#3a3a3a" stroke-width="0.8"/>
<text class="s" x="1042.50" y="104.00" text-anchor="end" style="font-size:8.95px" stroke="#000" stroke-width="0.18">10</text>
<line x1="1044.80" y1="79.86" x2="1048.00" y2="79.86" stroke="#3a3a3a" stroke-width="0.8"/>
<text class="s" x="1042.50" y="83.26" text-anchor="end" style="font-size:8.95px" stroke="#000" stroke-width="0.18">12</text>
<text class="s" x="1050.00" y="71.20" style="font-size:9.2px" stroke="#000" stroke-width="0.18">e</text>
<text class="s" x="1055.80" y="67.34" style="font-size:6.4399999999999995px">−17</text>
<text class="s" x="1068.35" y="71.20" style="font-size:9.2px" stroke="#000" stroke-width="0.18">x2</text>
<text class="s i" x="1079.67" y="71.20" style="font-size:9.2px" stroke="#000" stroke-width="0.18">Å</text>
<rect x="101.50" y="348.70" width="1198.00" height="83.70" fill="#fff"/>
<clipPath id="spc"><rect x="101.50" y="348.70" width="1198.00" height="83.70"/></clipPath>
<g clip-path="url(#spc)">
<path d="M105.91 426.40L108.3 419.5L114.2 419.5L120.1 419.8L126.0 419.4L132.0 419.6L137.9 419.8L143.8 420.1L149.7 420.1L155.7 419.9L161.6 420.0L167.5 420.4L173.4 420.2L179.4 420.3L185.3 420.5L191.2 420.6L197.1 420.7L203.1 420.6L209.0 420.9L214.9 420.8L220.8 420.9L226.8 421.1L232.7 421.2L238.6 421.5L244.5 421.3L250.5 421.7L256.4 421.7L262.3 421.7L268.2 421.5L274.2 421.9L280.1 421.9L286.0 422.1L291.9 422.2L297.9 422.0L303.8 422.4L309.7 422.1L315.6 422.4L321.6 422.4L327.5 422.5L333.4 422.2L339.3 422.3L345.3 422.6L351.2 422.2L357.1 422.5L363.0 422.4L369.0 422.6L374.9 422.6L380.8 422.6L386.7 422.7L392.7 422.9L398.6 422.5L404.5 422.8L410.4 422.5L416.3 422.9L422.3 423.0L428.2 422.7L434.1 423.1L440.0 423.0L446.0 423.1L451.9 422.8L457.8 422.7L463.7 423.1L469.7 423.3L475.6 423.2L481.5 422.9L487.4 423.3L493.4 423.2L499.3 423.2L505.2 423.2L511.1 422.9L517.1 422.8L523.0 422.9L528.9 422.9L534.8 423.1L540.8 423.2L546.7 422.9L552.6 423.2L558.5 422.9L564.5 422.9L570.4 423.0L576.3 423.2L582.2 422.9L588.2 422.9L594.1 423.0L600.0 422.9L605.9 422.9L611.9 423.3L617.8 423.1L623.7 423.0L629.6 423.3L635.6 422.9L641.5 423.0L647.4 423.0L653.3 423.0L659.3 423.0L665.2 423.1L671.1 423.0L677.0 423.2L683.0 423.4L688.9 423.1L694.8 423.0L700.7 423.3L706.7 423.0L712.6 423.4L718.5 423.0L724.4 423.2L730.3 423.0L736.3 423.3L742.2 423.0L748.1 423.4L754.0 423.0L760.0 423.2L765.9 423.1L771.8 423.0L777.7 423.3L783.7 423.3L789.6 423.4L795.5 423.4L801.4 423.2L807.4 423.2L813.3 423.1L819.2 423.3L825.1 423.2L831.1 423.3L837.0 423.4L842.9 423.3L848.8 423.0L854.8 423.2L860.7 423.4L866.6 423.3L872.5 423.4L878.5 423.1L884.4 423.3L890.3 423.1L896.2 423.2L902.2 423.5L908.1 423.1L914.0 423.1L919.9 423.3L925.9 423.2L931.8 423.3L937.7 423.5L943.6 423.4L949.6 423.5L955.5 423.1L961.4 423.2L967.3 423.1L973.3 423.3L979.2 423.3L985.1 423.2L991.0 423.5L997.0 423.3L1002.9 423.3L1008.8 423.4L1014.7 423.4L1020.6 423.2L1026.6 423.4L1032.5 423.4L1038.4 423.1L1044.3 423.4L1050.3 423.2L1056.2 423.4L1062.1 423.5L1068.0 423.3L1074.0 423.4L1079.9 423.3L1085.8 423.6L1091.7 423.2L1097.7 423.3L1103.6 423.6L1109.5 423.5L1115.4 423.2L1121.4 423.6L1127.3 423.5L1133.2 423.6L1139.1 423.3L1145.1 423.2L1151.0 423.4L1156.9 423.6L1162.8 423.5L1168.8 423.6L1174.7 423.5L1180.6 423.3L1186.5 423.4L1192.5 423.3L1198.4 423.4L1204.3 423.3L1210.2 423.5L1216.2 423.3L1222.1 423.7L1228.0 423.3L1233.9 423.5L1239.9 423.3L1245.8 423.5L1251.7 423.7L1257.6 423.7L1263.6 423.7L1269.5 423.3L1275.4 423.6L1281.3 423.5L1287.3 423.6L1293.2 423.3L1299.1 423.3L1299.1 429.2L1293.2 429.3L1287.3 429.3L1281.3 429.3L1275.4 429.4L1269.5 429.3L1263.6 429.6L1257.6 429.2L1251.7 429.3L1245.8 429.5L1239.9 429.6L1233.9 429.4L1228.0 429.6L1222.1 429.6L1216.2 429.5L1210.2 429.7L1204.3 429.5L1198.4 429.4L1192.5 429.4L1186.5 429.3L1180.6 429.4L1174.7 429.3L1168.8 429.3L1162.8 429.7L1156.9 429.8L1151.0 429.7L1145.1 429.6L1139.1 429.5L1133.2 429.4L1127.3 429.3L1121.4 429.7L1115.4 429.4L1109.5 429.3L1103.6 429.7L1097.7 429.7L1091.7 429.4L1085.8 429.3L1079.9 429.7L1074.0 429.4L1068.0 429.5L1062.1 429.6L1056.2 429.8L1050.3 429.7L1044.3 429.6L1038.4 429.4L1032.5 429.5L1026.6 429.7L1020.6 429.5L1014.7 429.6L1008.8 429.4L1002.9 429.5L997.0 429.5L991.0 429.5L985.1 429.4L979.2 429.4L973.3 429.6L967.3 429.8L961.4 429.5L955.5 429.5L949.6 429.9L943.6 429.7L937.7 429.6L931.8 429.4L925.9 429.9L919.9 429.7L914.0 429.7L908.1 429.8L902.2 429.8L896.2 429.9L890.3 429.7L884.4 429.9L878.5 429.6L872.5 429.5L866.6 429.5L860.7 429.5L854.8 429.6L848.8 429.6L842.9 429.6L837.0 429.5L831.1 429.9L825.1 429.6L819.2 429.7L813.3 430.0L807.4 429.5L801.4 429.8L795.5 429.9L789.6 429.6L783.7 429.6L777.7 429.6L771.8 429.9L765.9 430.0L760.0 429.6L754.0 429.8L748.1 429.7L742.2 430.0L736.3 429.8L730.3 429.9L724.4 429.8L718.5 430.0L712.6 429.6L706.7 429.8L700.7 429.9L694.8 429.7L688.9 429.8L683.0 430.0L677.0 429.8L671.1 429.7L665.2 429.9L659.3 430.0L653.3 429.8L647.4 429.7L641.5 430.0L635.6 430.1L629.6 430.1L623.7 429.6L617.8 429.8L611.9 430.0L605.9 429.8L600.0 430.0L594.1 430.1L588.2 429.6L582.2 430.1L576.3 429.7L570.4 429.8L564.5 429.9L558.5 429.8L552.6 429.8L546.7 429.7L540.8 429.7L534.8 430.1L528.9 429.8L523.0 429.8L517.1 429.9L511.1 429.9L505.2 430.1L499.3 429.7L493.4 430.1L487.4 430.0L481.5 429.9L475.6 429.7L469.7 430.0L463.7 430.0L457.8 430.0L451.9 430.1L446.0 430.0L440.0 429.8L434.1 430.1L428.2 430.3L422.3 430.3L416.3 430.4L410.4 430.3L404.5 430.5L398.6 430.4L392.7 430.5L386.7 430.6L380.8 430.2L374.9 430.6L369.0 430.6L363.0 430.3L357.1 430.3L351.2 430.4L345.3 430.7L339.3 430.4L333.4 430.4L327.5 430.6L321.6 430.7L315.6 430.8L309.7 430.7L303.8 431.0L297.9 431.0L291.9 430.9L286.0 430.9L280.1 431.2L274.2 431.3L268.2 431.4L262.3 431.4L256.4 431.4L250.5 431.5L244.5 431.9L238.6 431.8L232.7 431.9L226.8 432.0L220.8 431.8L214.9 432.1L209.0 432.3L203.1 432.1L197.1 432.6L191.2 432.6L185.3 432.5L179.4 432.9L173.4 432.6L167.5 432.8L161.6 433.1L155.7 432.9L149.7 432.9L143.8 433.4L137.9 433.4L132.0 433.5L126.0 433.3L120.1 433.6L114.2 433.8L108.3 434.0Z" fill="#c4c4c4"/>
<rect x="486.44" y="348.70" width="54.45" height="83.70" fill="#bfbf00"/>
<rect x="486.44" y="423.20" width="54.45" height="5.95" fill="#808060" opacity="0.55"/>
<line x1="101.50" y1="426.40" x2="1299.50" y2="426.40" stroke="#7a7a7a" stroke-width="1.6"/>
<line x1="576.50" y1="348.70" x2="576.50" y2="432.40" stroke="#6a6a6a" stroke-width="1.15" stroke-dasharray="4.4 1.9"/>
<line x1="810.60" y1="348.70" x2="810.60" y2="432.40" stroke="#6a6a6a" stroke-width="1.15" stroke-dasharray="4.4 1.9"/>
<line x1="873.60" y1="348.70" x2="873.60" y2="432.40" stroke="#6a6a6a" stroke-width="1.15" stroke-dasharray="4.4 1.9"/>
<line x1="1043.20" y1="348.70" x2="1043.20" y2="432.40" stroke="#6a6a6a" stroke-width="1.15" stroke-dasharray="4.4 1.9"/>
<line x1="513.50" y1="348.70" x2="513.50" y2="432.40" stroke="#111" stroke-width="1.1" stroke-dasharray="1.6 1.3"/>
<path d="M101.5 414.7L102.5 415.1L103.6 414.5L104.5 414.7L105.3 417.0L106.4 409.0L107.8 413.6L109.3 409.0L110.4 414.7L111.0 419.2L112.1 428.4L112.9 428.9L113.9 427.3L114.8 425.1L115.6 422.7L116.5 421.2L117.3 418.7L118.2 413.8L119.6 406.7L120.3 413.5L121.5 420.4L123.0 412.4L123.7 417.4L124.9 423.3L125.9 414.7L127.2 416.4L128.0 413.0L129.3 405.6L130.7 410.7L131.8 404.4L133.3 407.9L134.1 408.1L135.0 409.0L136.0 410.2L136.7 413.6L137.3 416.0L138.4 416.4L139.3 417.1L140.1 420.4L141.3 410.7L142.4 408.4L143.9 419.3L144.9 416.4L146.4 422.1L147.6 410.1L148.7 407.5L149.3 403.9L149.9 404.3L151.0 405.6L151.7 404.3L152.7 403.9L153.9 404.4L154.8 406.7L155.6 410.7L156.7 407.9L157.9 411.9L159.0 409.0L160.1 411.3L161.6 414.1L162.7 408.6L163.6 406.7L164.9 411.3L166.4 406.7L167.3 407.3L168.7 405.6L169.5 406.9L170.4 409.0L171.3 413.2L172.1 417.0L173.3 414.1L174.7 421.6L175.6 413.2L176.7 406.7L178.0 407.2L179.0 405.0L180.1 411.8L180.7 414.7L181.9 410.1L182.6 410.2L183.6 411.3L184.7 410.7L186.0 412.5L187.0 413.0L188.5 401.6L189.9 397.6L191.2 414.7L192.0 412.1L193.3 410.1L194.4 409.6L195.8 403.9L196.7 408.4L197.9 413.6L199.2 407.9L200.7 406.7L202.1 401.0L203.0 407.3L204.1 399.9L205.5 417.0L207.0 412.4L208.1 412.4L209.2 406.3L209.9 402.1L210.5 405.0L211.6 407.3L212.7 409.5L213.9 411.9L214.6 410.9L215.6 410.1L216.4 405.9L217.3 399.3L218.4 411.3L219.3 406.0L220.7 397.0L221.9 420.4L223.0 410.1L224.1 413.6L224.8 413.7L225.9 412.4L226.5 407.6L227.6 401.0L228.7 409.0L229.5 415.1L230.4 421.6L231.6 403.3L232.2 406.5L233.3 412.4L234.7 414.1L236.1 402.1L237.3 401.6L238.4 412.4L239.6 398.7L240.3 403.4L241.3 411.9L242.4 411.9L243.6 409.0L245.0 408.2L246.4 404.4L247.1 406.2L248.1 405.6L249.1 402.5L250.2 401.0L251.1 405.6L251.8 406.7L253.3 402.7L254.5 403.0L255.7 403.6L258.0 406.6L259.6 405.1L260.7 404.8L261.6 402.7L262.9 403.6L263.7 405.4L265.2 407.5L266.9 408.5L267.9 406.6L268.9 404.6L270.0 405.7L271.0 407.8L272.3 408.4L273.9 410.4L275.0 411.1L275.9 414.2L277.1 418.2L278.3 413.3L279.5 407.5L280.8 403.6L282.5 395.0L283.9 399.4L284.8 403.9L285.6 406.7L286.6 407.5L287.8 407.4L289.3 403.9L290.6 405.0L292.0 404.8L293.5 405.4L294.6 407.5L295.6 407.1L296.8 408.4L298.4 405.0L299.6 401.2L300.8 402.8L302.7 402.1L304.0 404.3L305.4 408.4L306.4 409.1L307.5 406.6L308.7 408.4L309.8 409.3L311.5 409.6L312.5 407.5L314.0 402.6L315.2 399.5L316.1 399.8L317.0 397.7L318.5 403.2L319.6 406.6L320.5 407.8L321.4 410.2L322.4 409.4L323.2 408.4L323.8 406.3L325.0 400.7L326.3 405.3L327.1 406.6L328.6 411.8L329.5 412.9L330.8 410.1L332.1 405.7L333.0 401.8L333.9 400.0L334.7 400.8L335.7 403.0L337.1 402.0L337.9 400.4L339.0 399.8L340.2 398.6L340.9 398.7L342.0 398.6L343.3 400.4L344.3 402.5L345.2 401.3L346.4 400.4L347.6 406.4L349.1 412.5L350.3 405.7L352.1 398.6L353.2 400.8L354.5 402.1L356.0 404.2L357.1 404.8L358.5 405.0L359.3 405.7L360.4 403.2L362.5 398.9L363.5 401.6L364.6 406.6L366.1 407.5L367.1 409.9L367.9 412.9L369.0 411.6L370.5 411.1L372.2 406.7L373.2 406.6L374.4 404.3L375.9 403.0L377.4 402.3L379.5 401.8L380.6 405.1L382.1 406.6L383.5 410.2L384.8 412.5L385.9 409.3L387.5 404.8L388.4 407.3L389.3 407.5L390.6 410.0L392.3 413.8L393.7 406.9L394.6 400.7L395.5 403.7L396.8 407.5L398.1 404.6L399.1 403.0L400.6 400.3L401.8 397.1L402.9 399.3L403.6 400.4L404.6 398.2L405.4 397.1L406.9 400.1L408.0 403.0L408.9 404.0L409.8 405.7L411.0 400.5L412.5 395.9L413.2 397.1L414.3 398.6L415.4 399.2L417.0 402.5L418.5 397.8L419.6 395.4L421.0 401.0L421.8 403.9L423.1 400.2L424.6 394.1L426.0 395.3L426.8 396.8L427.8 399.1L429.5 401.8L431.1 400.1L432.1 398.6L433.2 400.5L433.9 402.1L435.4 399.7L436.6 398.6L438.3 395.6L440.2 392.9L441.4 396.9L442.9 402.1L444.4 400.5L445.5 400.7L446.6 402.8L448.2 407.1L449.9 401.7L450.9 398.6L451.5 398.2L452.7 395.4L454.3 401.9L455.4 404.8L456.2 406.6L457.1 407.5L458.3 400.7L459.8 394.1L461.5 395.5L462.5 395.0L463.2 398.1L464.3 400.4L464.9 403.7L466.1 411.1L467.0 406.5L468.8 400.4L469.5 404.1L470.5 408.4L471.7 408.4L473.2 410.2L474.1 408.6L475.4 407.5L476.8 402.9L477.7 399.5L478.4 401.3L479.5 403.0L480.0 402.1L481.1 400.2L482.1 398.6L483.6 402.5L484.7 400.0L485.7 396.8L487.1 397.9L488.0 398.6L489.3 396.6L490.4 395.0L491.3 395.2L492.1 395.9L493.4 403.0L494.2 399.7L495.2 395.9L496.2 393.0L497.0 391.8L498.1 396.0L498.8 398.6L499.8 401.0L500.5 401.8L501.8 400.0L503.0 404.6L503.8 406.6L504.8 404.7L505.9 403.0L507.1 403.2L508.2 402.1L509.5 398.6L510.5 394.5L511.2 393.2L512.0 390.6L513.4 388.8L514.8 393.2L515.5 393.5L516.6 396.8L517.2 397.8L518.4 401.2L519.3 401.0L520.7 399.5L521.9 404.9L522.9 407.5L524.0 409.2L524.6 409.3L526.0 407.9L526.8 408.9L527.5 408.6L528.6 405.7L530.0 409.6L531.1 408.3L532.1 408.4L533.5 406.1L534.5 404.8L535.7 403.0L536.8 402.1L537.7 400.0L538.9 399.5L539.9 399.6L540.7 397.7L542.1 400.0L542.9 400.4L544.0 402.3L544.6 403.9L545.6 407.5L546.8 409.6L547.8 406.3L548.8 402.5L549.4 401.6L550.5 401.8L551.4 402.7L552.3 402.5L553.4 400.2L554.1 397.7L554.9 397.0L555.9 396.8L557.0 400.7L557.7 401.2L558.6 399.6L559.5 399.5L560.4 400.0L561.2 400.4L562.5 401.3L563.9 403.9L564.8 402.7L565.7 400.7L566.5 399.3L567.9 396.8L569.0 396.8L569.6 395.9L570.4 396.8L571.4 398.6L572.3 397.8L573.8 395.0L574.7 393.7L575.5 394.1L576.7 396.8L577.9 398.9L578.8 396.1L579.6 394.1L580.4 392.7L581.4 391.8L582.6 391.4L583.2 391.8L584.3 394.2L585.4 396.8L586.2 398.3L587.5 401.2L588.2 401.6L589.3 403.0L590.4 405.6L591.6 409.3L593.3 411.1L594.3 412.9L595.1 413.1L596.1 412.5L596.9 410.2L597.9 407.5L599.0 402.6L600.0 400.4L601.4 402.1L602.4 398.7L603.2 397.7L604.1 396.9L605.4 394.1L606.5 393.7L607.1 392.9L608.1 393.2L609.5 394.1L610.2 395.5L611.2 395.4L612.2 398.2L613.6 403.9L614.7 408.3L615.7 411.4L616.7 412.6L617.5 413.8L618.6 413.1L619.3 412.9L620.4 408.7L621.1 406.6L622.1 401.5L623.2 396.8L624.5 393.4L625.5 389.6L626.3 388.8L627.3 387.5L628.6 386.7L629.6 386.1L630.8 388.3L631.8 389.6L633.0 388.3L633.9 387.9L635.0 386.1L636.2 386.4L637.4 388.0L638.0 387.9L638.9 388.6L639.8 387.0L640.9 386.7L641.6 387.9L642.9 391.8L643.9 387.3L644.6 384.6L645.4 383.5L646.4 383.4L647.3 381.0L648.2 380.7L649.1 380.8L650.5 383.4L651.6 382.6L652.9 383.4L653.5 381.2L654.6 375.7L655.5 380.7L656.4 386.4L657.6 388.0L658.6 387.5L659.4 384.9L660.7 382.5L662.1 382.2L663.0 380.4L664.2 382.0L664.8 382.9L665.9 385.6L667.1 390.5L668.5 385.1L669.3 380.7L670.4 378.7L671.4 375.4L672.4 378.5L673.8 382.5L674.9 382.4L675.5 383.9L677.0 383.6L678.2 384.6L679.8 388.7L680.9 390.0L681.9 389.2L682.7 388.8L683.5 386.6L685.0 382.9L686.0 384.1L687.1 386.1L687.9 386.3L689.3 383.9L690.5 383.2L691.6 382.1L692.7 380.1L693.4 377.1L694.3 379.5L695.2 381.6L696.8 378.8L697.9 377.5L699.5 380.6L700.5 384.3L701.9 390.7L702.9 395.0L704.0 391.9L705.0 387.0L706.1 383.4L707.7 378.9L709.0 380.6L710.0 380.7L710.9 384.1L711.8 386.1L712.8 381.0L713.6 375.4L714.7 380.4L715.7 385.2L716.9 382.2L718.4 380.7L719.0 378.2L720.0 377.1L721.1 378.6L721.8 380.7L722.9 382.9L723.9 386.4L725.4 386.8L726.2 387.0L727.2 385.2L728.6 380.7L729.7 384.6L730.4 385.2L731.3 384.2L732.5 383.4L734.0 384.1L735.2 385.7L736.3 388.7L737.3 390.5L738.5 388.2L739.3 385.2L740.7 381.6L741.8 379.8L743.1 377.3L744.1 375.7L745.0 376.9L746.4 381.6L747.4 383.2L748.2 385.2L749.0 383.5L750.4 380.7L751.4 381.6L752.5 383.4L753.9 382.1L755.3 385.7L756.6 388.8L757.5 386.7L758.4 382.5L759.5 379.2L760.2 378.0L761.6 379.8L762.5 381.6L763.9 381.7L764.6 383.4L765.6 386.6L766.8 388.2L768.1 387.0L769.1 385.2L770.2 383.8L771.8 383.9L773.5 379.9L774.5 379.3L775.4 381.3L776.8 384.6L778.1 383.3L778.9 381.6L780.3 379.1L781.1 376.8L782.2 382.2L783.4 386.1L784.6 389.3L785.7 384.8L787.0 381.6L788.1 379.9L788.8 377.5L790.0 381.7L791.1 385.2L791.8 384.7L792.9 385.7L793.7 382.6L795.0 379.8L796.1 379.3L797.1 376.8L798.6 380.4L799.5 382.5L800.7 381.9L801.8 381.6L803.0 381.1L803.9 379.8L805.3 380.3L806.1 379.3L807.4 379.3L808.4 378.9L809.3 375.6L810.7 370.9L811.6 374.8L812.5 380.7L813.8 387.0L814.7 384.8L816.1 382.1L816.9 382.7L818.2 382.9L819.2 383.1L820.4 380.7L821.6 382.2L822.7 383.4L824.0 384.4L825.4 386.1L826.2 388.1L827.5 388.2L828.9 388.4L829.8 387.9L830.8 389.1L831.6 391.8L832.5 393.4L833.4 396.4L834.6 396.4L836.1 395.9L837.1 395.6L838.8 396.8L839.8 392.7L840.5 389.6L842.0 381.7L842.9 378.0L843.7 376.7L845.0 371.8L846.1 375.6L847.1 378.0L848.1 380.9L848.9 385.2L850.4 380.0L851.2 377.1L852.7 373.5L853.6 372.7L854.5 374.0L855.7 375.4L856.6 380.2L857.9 384.6L858.9 381.6L860.2 379.8L861.2 376.1L862.9 371.8L864.2 376.1L865.0 377.1L866.0 378.7L866.8 380.4L867.6 379.3L869.1 375.4L870.0 373.3L871.4 371.8L872.5 370.5L873.6 367.3L874.3 367.7L875.4 370.9L876.7 371.4L877.5 373.6L878.5 373.7L879.3 375.4L880.3 376.2L881.6 378.9L882.5 377.2L883.4 373.2L884.5 376.7L885.2 378.9L886.2 380.2L887.9 384.3L888.8 384.4L890.0 382.9L891.4 378.0L892.8 378.0L893.6 379.8L894.6 378.5L895.9 374.5L897.0 374.0L898.6 375.7L899.5 377.6L900.7 378.0L901.7 379.7L903.0 380.7L904.1 376.1L905.7 367.9L906.4 371.4L907.5 376.2L908.7 375.1L909.6 372.7L910.8 372.6L912.0 370.0L913.1 371.8L914.3 371.4L915.6 371.5L916.4 369.6L917.2 369.6L918.6 370.9L919.9 371.3L920.9 370.0L921.7 372.3L922.7 373.9L923.8 371.7L925.0 371.8L925.9 368.9L927.5 367.3L928.5 370.2L929.8 371.8L931.1 374.6L932.1 375.4L933.5 376.2L934.3 377.1L935.5 377.0L936.4 376.2L937.7 375.3L938.8 376.2L940.2 371.0L941.1 369.1L942.1 371.7L943.2 373.6L944.4 370.8L945.4 367.3L946.4 365.0L947.7 363.2L949.0 365.0L950.0 368.2L951.3 367.2L952.1 367.3L953.1 364.6L954.3 362.5L955.6 363.7L956.6 366.1L957.5 365.9L958.9 368.2L960.0 369.1L960.7 367.7L961.8 364.6L962.9 361.1L963.6 361.1L964.6 361.6L965.7 362.9L966.7 363.3L968.0 364.6L968.9 363.0L970.4 360.7L971.3 360.4L972.5 362.5L973.3 362.8L974.6 360.7L976.0 365.6L977.0 367.3L978.3 370.5L979.3 371.8L980.2 371.0L981.4 372.1L982.8 368.7L983.6 366.1L984.9 363.9L985.9 363.8L987.3 362.1L988.2 360.7L989.0 361.8L990.4 365.5L991.7 367.8L992.5 368.6L993.4 365.7L994.8 363.8L995.8 362.4L996.6 362.0L997.5 362.9L998.4 365.5L999.3 363.7L1000.7 361.1L1001.7 359.9L1002.9 360.2L1003.7 359.3L1005.0 358.4L1005.9 357.5L1007.3 358.9L1008.2 357.1L1009.1 357.5L1010.4 361.2L1011.4 362.9L1012.6 364.4L1013.6 363.8L1014.4 364.5L1015.7 366.1L1016.6 365.6L1017.5 367.3L1018.9 367.0L1019.8 368.6L1021.0 365.3L1021.6 362.9L1023.1 360.4L1023.9 360.7L1025.0 365.9L1025.7 367.3L1026.8 369.1L1027.5 370.0L1028.7 364.1L1029.6 359.3L1030.7 362.9L1031.4 365.0L1032.3 360.5L1033.2 356.6L1034.2 354.9L1035.0 353.0L1036.4 356.5L1037.1 357.5L1038.2 357.4L1039.5 356.1L1040.2 357.0L1041.2 358.4L1042.2 356.7L1043.0 353.9L1043.7 354.4L1044.8 357.5L1045.8 358.7L1047.1 359.6L1048.0 360.0L1049.3 360.2L1050.6 362.5L1051.4 364.3L1052.4 363.6L1053.8 362.0L1054.8 364.1L1056.1 366.8L1056.9 364.6L1058.2 360.2L1059.0 362.2L1060.0 362.0L1061.1 363.9L1062.1 365.0L1063.6 361.7L1064.5 357.9L1065.3 358.6L1066.8 357.1L1067.6 360.1L1068.9 362.0L1070.5 367.1L1071.6 371.8L1072.9 367.9L1073.9 364.6L1075.0 364.1L1076.1 362.9L1077.1 363.7L1078.2 363.8L1079.8 364.6L1081.1 367.3L1082.2 364.2L1083.2 360.7L1084.3 361.2L1085.0 361.4L1086.1 363.0L1087.1 366.1L1088.1 364.4L1089.5 359.6L1090.1 359.9L1091.2 357.9L1092.1 360.9L1093.6 366.4L1094.7 363.2L1095.7 362.5L1096.6 359.8L1097.5 355.4L1098.5 356.8L1099.6 360.2L1100.5 360.8L1102.0 358.9L1103.0 358.5L1104.6 356.6L1106.1 358.0L1107.3 360.2L1108.5 360.2L1109.6 359.3L1110.5 361.3L1111.8 365.5L1113.1 358.9L1113.9 356.1L1115.1 357.1L1116.2 358.4L1117.6 357.7L1118.6 355.7L1119.8 356.5L1120.7 356.6L1121.8 354.4L1122.9 354.3L1124.1 355.3L1125.2 356.6L1126.2 359.7L1127.0 362.5L1127.9 361.5L1129.3 360.7L1130.4 361.5L1131.1 362.0L1132.1 358.0L1132.9 356.6L1133.7 359.0L1135.0 363.8L1136.1 361.3L1137.1 360.7L1138.6 361.1L1139.5 362.0L1140.4 360.4L1142.1 359.3L1143.2 358.5L1144.3 357.1L1145.7 360.6L1146.6 364.6L1147.8 360.9L1148.4 357.5L1149.3 361.6L1150.2 365.0L1151.2 360.1L1152.5 355.7L1153.6 355.7L1155.5 352.5L1157.0 354.4L1157.9 355.7L1159.0 356.4L1160.0 357.1L1161.2 358.6L1162.1 361.4L1163.5 361.0L1164.5 362.0L1165.4 360.4L1166.2 358.4L1167.7 355.4L1168.6 353.0L1169.4 356.7L1170.7 360.2L1171.5 357.4L1172.5 353.9L1173.6 361.9L1174.3 365.5L1175.1 363.6L1176.4 360.7L1177.5 359.2L1178.8 355.4L1179.8 356.9L1181.1 356.6L1182.3 359.2L1183.2 361.4L1184.8 360.1L1185.9 358.4L1186.9 357.4L1188.6 357.1L1189.6 358.2L1191.2 357.9L1192.1 360.1L1193.0 363.8L1194.3 369.5L1195.4 371.8L1196.3 372.8L1197.9 373.2L1198.8 371.1L1200.2 366.4L1201.5 366.6L1202.5 365.5L1203.8 364.0L1205.0 364.3L1206.4 362.5L1207.3 362.9L1208.7 363.2L1210.0 361.4L1211.1 363.4L1212.5 366.1L1213.7 363.5L1214.6 360.7L1215.7 359.9L1217.0 359.3L1218.1 358.5L1218.8 357.1L1219.5 356.4L1220.5 354.3L1221.6 356.5L1222.3 357.5L1223.6 361.4L1225.0 359.3L1225.9 358.9L1226.9 360.6L1228.2 360.7L1229.0 361.3L1230.0 364.3L1230.7 363.6L1231.8 360.2L1233.1 361.6L1233.9 363.8L1235.2 365.6L1236.1 368.2L1237.0 362.7L1237.9 360.2L1238.8 359.2L1239.6 357.1L1240.8 358.1L1242.0 358.4L1242.9 359.7L1244.3 362.0L1245.5 360.3L1246.4 359.6L1247.7 360.2L1248.6 360.2L1249.6 354.4L1250.4 349.5L1251.1 351.8L1252.1 353.0L1253.2 351.8L1253.9 351.2L1255.2 353.1L1256.2 354.8L1257.5 356.7L1258.6 359.3L1259.6 355.8L1260.7 353.0L1262.0 355.0L1262.9 355.7L1264.1 356.7L1265.2 357.5L1266.3 356.0L1267.5 356.1L1268.5 358.2L1269.3 360.2L1270.3 357.0L1271.4 353.0L1272.1 357.2L1273.2 362.9L1274.3 362.0L1275.0 362.0L1275.9 364.3L1277.1 365.0L1278.4 363.4L1279.5 362.9L1280.3 362.4L1281.8 361.1L1282.5 360.7L1283.6 357.9L1284.8 364.3L1286.1 361.7L1287.1 360.7L1288.2 359.9L1289.3 361.1L1290.2 360.8L1291.4 360.2L1292.5 358.9L1293.2 358.4L1294.4 359.7L1295.0 361.4L1295.9 362.0L1297.3 360.7L1298.6 360.2" stroke="#0000ff" stroke-width="1.05" fill="none" stroke-linejoin="round"/>
<rect x="135.00" y="348.70" width="11.60" height="83.70" fill="#7c7c7c" opacity="0.78"/>
<clipPath id="h135"><rect x="135.00" y="348.70" width="11.60" height="83.70"/></clipPath>
<path d="M135.00 338.80L146.60 328.00M135.00 362.20L146.60 351.40M135.00 385.60L146.60 374.80M135.00 409.00L146.60 398.20M135.00 432.40L146.60 421.60M135.00 455.80L146.60 445.00" stroke="#000" stroke-width="1" fill="none" clip-path="url(#h135)"/>
<path d="M135.00 348.70V432.40M146.60 348.70V432.40" stroke="#111" stroke-width="1.1" fill="none"/>
<rect x="1273.30" y="348.70" width="6.50" height="83.70" fill="#7c7c7c" opacity="0.78"/>
<clipPath id="h1273"><rect x="1273.30" y="348.70" width="6.50" height="83.70"/></clipPath>
<path d="M1273.30 344.10L1279.80 338.90M1273.30 367.50L1279.80 362.30M1273.30 390.90L1279.80 385.70M1273.30 414.30L1279.80 409.10M1273.30 437.70L1279.80 432.50M1273.30 461.10L1279.80 455.90" stroke="#000" stroke-width="1" fill="none" clip-path="url(#h1273)"/>
<path d="M1273.30 348.70V432.40M1279.80 348.70V432.40" stroke="#111" stroke-width="1.1" fill="none"/>
</g>
<rect x="101.50" y="348.70" width="1198.00" height="83.70" fill="none" stroke="#3a3a3a" stroke-width="1"/>
<line x1="114.20" y1="432.40" x2="114.20" y2="435.60" stroke="#3a3a3a" stroke-width="0.8"/>
<text class="s" x="114.20" y="447.50" text-anchor="middle" style="font-size:9.7px" stroke="#000" stroke-width="0.19">3500</text>
<line x1="173.44" y1="432.40" x2="173.44" y2="435.60" stroke="#3a3a3a" stroke-width="0.8"/>
<text class="s" x="173.44" y="447.50" text-anchor="middle" style="font-size:9.7px" stroke="#000" stroke-width="0.19">3600</text>
<line x1="232.69" y1="432.40" x2="232.69" y2="435.60" stroke="#3a3a3a" stroke-width="0.8"/>
<text class="s" x="232.69" y="447.50" text-anchor="middle" style="font-size:9.7px" stroke="#000" stroke-width="0.19">3700</text>
<line x1="291.94" y1="432.40" x2="291.94" y2="435.60" stroke="#3a3a3a" stroke-width="0.8"/>
<text class="s" x="291.94" y="447.50" text-anchor="middle" style="font-size:9.7px" stroke="#000" stroke-width="0.19">3800</text>
<line x1="351.18" y1="432.40" x2="351.18" y2="435.60" stroke="#3a3a3a" stroke-width="0.8"/>
<text class="s" x="351.18" y="447.50" text-anchor="middle" style="font-size:9.7px" stroke="#000" stroke-width="0.19">3900</text>
<line x1="410.43" y1="432.40" x2="410.43" y2="435.60" stroke="#3a3a3a" stroke-width="0.8"/>
<text class="s" x="410.43" y="447.50" text-anchor="middle" style="font-size:9.7px" stroke="#000" stroke-width="0.19">4000</text>
<line x1="469.67" y1="432.40" x2="469.67" y2="435.60" stroke="#3a3a3a" stroke-width="0.8"/>
<text class="s" x="469.67" y="447.50" text-anchor="middle" style="font-size:9.7px" stroke="#000" stroke-width="0.19">4100</text>
<line x1="528.92" y1="432.40" x2="528.92" y2="435.60" stroke="#3a3a3a" stroke-width="0.8"/>
<text class="s" x="528.92" y="447.50" text-anchor="middle" style="font-size:9.7px" stroke="#000" stroke-width="0.19">4200</text>
<line x1="588.16" y1="432.40" x2="588.16" y2="435.60" stroke="#3a3a3a" stroke-width="0.8"/>
<text class="s" x="588.16" y="447.50" text-anchor="middle" style="font-size:9.7px" stroke="#000" stroke-width="0.19">4300</text>
<line x1="647.41" y1="432.40" x2="647.41" y2="435.60" stroke="#3a3a3a" stroke-width="0.8"/>
<text class="s" x="647.41" y="447.50" text-anchor="middle" style="font-size:9.7px" stroke="#000" stroke-width="0.19">4400</text>
<line x1="706.65" y1="432.40" x2="706.65" y2="435.60" stroke="#3a3a3a" stroke-width="0.8"/>
<text class="s" x="706.65" y="447.50" text-anchor="middle" style="font-size:9.7px" stroke="#000" stroke-width="0.19">4500</text>
<line x1="765.90" y1="432.40" x2="765.90" y2="435.60" stroke="#3a3a3a" stroke-width="0.8"/>
<text class="s" x="765.90" y="447.50" text-anchor="middle" style="font-size:9.7px" stroke="#000" stroke-width="0.19">4600</text>
<line x1="825.14" y1="432.40" x2="825.14" y2="435.60" stroke="#3a3a3a" stroke-width="0.8"/>
<text class="s" x="825.14" y="447.50" text-anchor="middle" style="font-size:9.7px" stroke="#000" stroke-width="0.19">4700</text>
<line x1="884.39" y1="432.40" x2="884.39" y2="435.60" stroke="#3a3a3a" stroke-width="0.8"/>
<text class="s" x="884.39" y="447.50" text-anchor="middle" style="font-size:9.7px" stroke="#000" stroke-width="0.19">4800</text>
<line x1="943.63" y1="432.40" x2="943.63" y2="435.60" stroke="#3a3a3a" stroke-width="0.8"/>
<text class="s" x="943.63" y="447.50" text-anchor="middle" style="font-size:9.7px" stroke="#000" stroke-width="0.19">4900</text>
<line x1="1002.88" y1="432.40" x2="1002.88" y2="435.60" stroke="#3a3a3a" stroke-width="0.8"/>
<text class="s" x="1002.88" y="447.50" text-anchor="middle" style="font-size:9.7px" stroke="#000" stroke-width="0.19">5000</text>
<line x1="1062.12" y1="432.40" x2="1062.12" y2="435.60" stroke="#3a3a3a" stroke-width="0.8"/>
<text class="s" x="1062.12" y="447.50" text-anchor="middle" style="font-size:9.7px" stroke="#000" stroke-width="0.19">5100</text>
<line x1="1121.37" y1="432.40" x2="1121.37" y2="435.60" stroke="#3a3a3a" stroke-width="0.8"/>
<text class="s" x="1121.37" y="447.50" text-anchor="middle" style="font-size:9.7px" stroke="#000" stroke-width="0.19">5200</text>
<line x1="1180.61" y1="432.40" x2="1180.61" y2="435.60" stroke="#3a3a3a" stroke-width="0.8"/>
<text class="s" x="1180.61" y="447.50" text-anchor="middle" style="font-size:9.7px" stroke="#000" stroke-width="0.19">5300</text>
<line x1="1239.86" y1="432.40" x2="1239.86" y2="435.60" stroke="#3a3a3a" stroke-width="0.8"/>
<text class="s" x="1239.86" y="447.50" text-anchor="middle" style="font-size:9.7px" stroke="#000" stroke-width="0.19">5400</text>
<line x1="1299.10" y1="432.40" x2="1299.10" y2="435.60" stroke="#3a3a3a" stroke-width="0.8"/>
<text class="s" x="1299.10" y="447.50" text-anchor="middle" style="font-size:9.7px" stroke="#000" stroke-width="0.19">5500</text>
<line x1="98.30" y1="426.40" x2="101.50" y2="426.40" stroke="#3a3a3a" stroke-width="0.8"/>
<text class="s" x="96.00" y="429.80" text-anchor="end" style="font-size:9.7px" stroke="#000" stroke-width="0.19">0</text>
<line x1="98.30" y1="395.90" x2="101.50" y2="395.90" stroke="#3a3a3a" stroke-width="0.8"/>
<text class="s" x="96.00" y="399.30" text-anchor="end" style="font-size:9.7px" stroke="#000" stroke-width="0.19">10</text>
<line x1="98.30" y1="365.40" x2="101.50" y2="365.40" stroke="#3a3a3a" stroke-width="0.8"/>
<text class="s" x="96.00" y="368.80" text-anchor="end" style="font-size:9.7px" stroke="#000" stroke-width="0.19">20</text>
<text class="s" x="114.20" y="346.60" style="font-size:9.9px" stroke="#000" stroke-width="0.20">e</text>
<text class="s" x="120.44" y="342.44" style="font-size:6.93px">−17</text>
<text class="s" x="133.95" y="346.60" style="font-size:9.9px" stroke="#000" stroke-width="0.20">x2</text>
<text class="s i" x="146.13" y="346.60" style="font-size:9.9px" stroke="#000" stroke-width="0.20">Å</text>
<text class="s" style="font-size:10.0px" fill="#ffa500" text-anchor="end" transform="translate(144.40 297.90) rotate(90)">SiIV</text>
<text class="s" style="font-size:10.0px" fill="#ffa500" text-anchor="end" transform="translate(144.40 306.10) rotate(90) scale(0.72 1)">{</text>
<text class="s" style="font-size:10.0px" fill="#ff0000" text-anchor="end" transform="translate(142.70 336.72) rotate(90)">OVI</text>
<text class="s" style="font-size:10.0px" fill="#ff0000" text-anchor="end" transform="translate(142.70 348.10) rotate(90) scale(0.72 1)">{</text>
<text class="s" style="font-size:10.0px" fill="#800080" text-anchor="end" transform="translate(163.00 339.90) rotate(90)">HeII</text>
<text class="s" style="font-size:10.0px" fill="#800080" text-anchor="end" transform="translate(163.00 348.10) rotate(90) scale(0.72 1)">{</text>
<text class="s" style="font-size:10.0px" fill="#8a2be2" text-anchor="end" transform="translate(269.00 339.90) rotate(90)">SiIV</text>
<text class="s" style="font-size:10.0px" fill="#8a2be2" text-anchor="end" transform="translate(269.00 348.10) rotate(90) scale(0.72 1)">{</text>
<text class="s" style="font-size:10.0px" fill="#87ceeb" text-anchor="end" transform="translate(361.10 336.72) rotate(90)">OII</text>
<text class="s" style="font-size:10.0px" fill="#87ceeb" text-anchor="end" transform="translate(361.10 348.10) rotate(90) scale(0.72 1)">{</text>
<text class="s" style="font-size:10.0px" fill="#ffa500" text-anchor="end" transform="translate(374.00 336.72) rotate(90)">CIV</text>
<text class="s" style="font-size:10.0px" fill="#ffa500" text-anchor="end" transform="translate(374.00 348.10) rotate(90) scale(0.72 1)">{</text>
<text class="s" style="font-size:10.0px" fill="#87ceeb" text-anchor="end" transform="translate(381.70 336.72) rotate(90)">OII</text>
<text class="s" style="font-size:10.0px" fill="#87ceeb" text-anchor="end" transform="translate(381.70 348.10) rotate(90) scale(0.72 1)">{</text>
<text class="s" style="font-size:10.0px" fill="#87ceeb" text-anchor="end" transform="translate(488.60 339.90) rotate(90)">(K)CaII</text>
<text class="s" style="font-size:10.0px" fill="#87ceeb" text-anchor="end" transform="translate(488.60 348.10) rotate(90) scale(0.72 1)">{</text>
<text class="s" style="font-size:10.0px" fill="#ff0000" text-anchor="end" transform="translate(561.70 333.54) rotate(90)">NV</text>
<text class="s" style="font-size:10.0px" fill="#ff0000" text-anchor="end" transform="translate(561.70 348.10) rotate(90) scale(0.72 1)">{</text>
<text class="s" style="font-size:10.0px" fill="#ff0000" text-anchor="end" transform="translate(608.30 339.90) rotate(90)">SiII</text>
<text class="s" style="font-size:10.0px" fill="#ff0000" text-anchor="end" transform="translate(608.30 348.10) rotate(90) scale(0.72 1)">{</text>
<text class="s" style="font-size:10.0px" fill="#8a2be2" text-anchor="end" transform="translate(655.70 339.90) rotate(90)">HeII</text>
<text class="s" style="font-size:10.0px" fill="#8a2be2" text-anchor="end" transform="translate(655.70 348.10) rotate(90) scale(0.72 1)">{</text>
<text class="s" style="font-size:10.0px" fill="#87ceeb" text-anchor="end" transform="translate(742.60 340.50) rotate(90)">Hγ</text>
<text class="s" style="font-size:10.0px" fill="#87ceeb" text-anchor="end" transform="translate(742.60 348.70) rotate(90) scale(0.72 1)">{</text>
<text class="s" style="font-size:10.0px" fill="#87ceeb" text-anchor="end" transform="translate(766.40 340.50) rotate(90)">Hγ</text>
<text class="s" style="font-size:10.0px" fill="#87ceeb" text-anchor="end" transform="translate(766.40 348.70) rotate(90) scale(0.72 1)">{</text>
<text class="s" style="font-size:10.0px" fill="#ff0000" text-anchor="end" transform="translate(881.40 339.90) rotate(90)">SiIV</text>
<text class="s" style="font-size:10.0px" fill="#ff0000" text-anchor="end" transform="translate(881.40 348.10) rotate(90) scale(0.72 1)">{</text>
<text class="s" style="font-size:10.0px" fill="#008000" text-anchor="end" transform="translate(917.30 340.50) rotate(90)">Hγ</text>
<text class="s" style="font-size:10.0px" fill="#008000" text-anchor="end" transform="translate(917.30 348.70) rotate(90) scale(0.72 1)">{</text>
<text class="s" style="font-size:10.0px" fill="#ffa500" text-anchor="end" transform="translate(915.40 297.90) rotate(90)">CIII</text>
<text class="s" style="font-size:10.0px" fill="#ffa500" text-anchor="end" transform="translate(915.40 306.10) rotate(90) scale(0.72 1)">{</text>
<text class="s" style="font-size:10.0px" fill="#800080" text-anchor="end" transform="translate(1049.30 336.72) rotate(90)">CII</text>
<text class="s" style="font-size:10.0px" fill="#800080" text-anchor="end" transform="translate(1049.30 348.10) rotate(90) scale(0.72 1)">{</text>
<text class="s" style="font-size:10.0px" fill="#87ceeb" text-anchor="end" transform="translate(1066.90 340.50) rotate(90)">Hβ</text>
<text class="s" style="font-size:10.0px" fill="#87ceeb" text-anchor="end" transform="translate(1066.90 348.70) rotate(90) scale(0.72 1)">{</text>
<text class="s" style="font-size:10.0px" fill="#8a2be2" text-anchor="end" transform="translate(1085.00 339.90) rotate(90)">CIII</text>
<text class="s" style="font-size:10.0px" fill="#8a2be2" text-anchor="end" transform="translate(1085.00 348.10) rotate(90) scale(0.72 1)">{</text>
<text class="s" style="font-size:10.0px" fill="#87ceeb" text-anchor="end" transform="translate(1093.60 340.50) rotate(90)">Hβ</text>
<text class="s" style="font-size:10.0px" fill="#87ceeb" text-anchor="end" transform="translate(1093.60 348.70) rotate(90) scale(0.72 1)">{</text>
<text class="s" style="font-size:10.0px" fill="#87ceeb" text-anchor="end" transform="translate(1128.60 339.90) rotate(90)">OIII</text>
<text class="s" style="font-size:10.0px" fill="#87ceeb" text-anchor="end" transform="translate(1128.60 348.10) rotate(90) scale(0.72 1)">{</text>
<text class="s" style="font-size:10.0px" fill="#87ceeb" text-anchor="end" transform="translate(1156.40 339.90) rotate(90)">OIII</text>
<text class="s" style="font-size:10.0px" fill="#87ceeb" text-anchor="end" transform="translate(1156.40 348.10) rotate(90) scale(0.72 1)">{</text>
<text class="s" style="font-size:10.0px" fill="#ff0000" text-anchor="end" transform="translate(1190.00 336.72) rotate(90)">CIV</text>
<text class="s" style="font-size:10.0px" fill="#ff0000" text-anchor="end" transform="translate(1190.00 348.10) rotate(90) scale(0.72 1)">{</text>
<text class="s" style="font-size:10.0px" fill="#87ceeb" text-anchor="end" transform="translate(1158.30 297.90) rotate(90)">OIII</text>
<text class="s" style="font-size:10.0px" fill="#87ceeb" text-anchor="end" transform="translate(1158.30 306.10) rotate(90) scale(0.72 1)">{</text>
<text class="s" style="font-size:10.0px" fill="#87ceeb" text-anchor="end" transform="translate(1186.00 297.90) rotate(90)">OIII</text>
<text class="s" style="font-size:10.0px" fill="#87ceeb" text-anchor="end" transform="translate(1186.00 306.10) rotate(90) scale(0.72 1)">{</text>
<text class="s" style="font-size:10.0px" fill="#87ceeb" text-anchor="end" transform="translate(1250.00 336.72) rotate(90)">NaI</text>
<text class="s" style="font-size:10.0px" fill="#87ceeb" text-anchor="end" transform="translate(1250.00 348.10) rotate(90) scale(0.72 1)">{</text>
<text class="s" style="font-size:10.0px" fill="#008000" text-anchor="end" transform="translate(1262.60 340.50) rotate(90)">Hβ</text>
<text class="s" style="font-size:10.0px" fill="#008000" text-anchor="end" transform="translate(1262.60 348.70) rotate(90) scale(0.72 1)">{</text>
<rect x="507.40" y="450.4" width="17.6" height="6.2" fill="#ff0000"/>
<text class="s" x="531.60" y="456.30" style="font-size:7.5px">Lyα</text>
<rect x="561.40" y="450.4" width="17.6" height="6.2" fill="#008000"/>
<text class="s" x="585.60" y="456.30" style="font-size:7.5px">OII</text>
<rect x="613.90" y="450.4" width="17.6" height="6.2" fill="#8a2be2"/>
<text class="s" x="638.10" y="456.30" style="font-size:7.5px">CIV</text>
<rect x="669.10" y="450.4" width="17.6" height="6.2" fill="#800080"/>
<text class="s" x="693.30" y="456.30" style="font-size:7.5px">CIII</text>
<rect x="720.40" y="450.4" width="17.6" height="6.2" fill="#ffa500"/>
<text class="s" x="744.60" y="456.30" style="font-size:7.5px">HeII</text>
<rect x="775.90" y="450.4" width="17.6" height="6.2" fill="#87ceeb"/>
<text class="s" x="800.10" y="456.30" style="font-size:7.5px">(K)CaII</text>
<rect x="841.00" y="450.4" width="17.6" height="6.2" fill="#87ceeb"/>
<text class="s" x="865.20" y="456.30" style="font-size:7.5px">(H)CaII</text>
<text><tspan class="m" x="70.00" y="498.60" stroke="#000" stroke-width="0.26">HSC-DEX : Possible Matches = 1 (within +/- 3")  P(LAE)/P(OII): </tspan><tspan class="s" x="562.00" y="498.60" stroke="#000" stroke-width="0.26">0.067</tspan><tspan class="s" x="603.20" y="493.60" style="font-size:9.1px" stroke="#000" stroke-width="0.18">0.138 </tspan><tspan class="s" x="603.20" y="501.80" style="font-size:9.1px" stroke="#000" stroke-width="0.18">0.037 </tspan><tspan class="m" x="638.50" y="498.60" stroke="#000" stroke-width="0.26">(r)</tspan></text>
<defs>
<radialGradient id="gal" cx="0.5" cy="0.5" r="0.5">
<stop offset="0" stop-color="#000"/>
<stop offset="0.17" stop-color="#000"/>
<stop offset="0.23" stop-color="#161616"/>
<stop offset="0.285" stop-color="#4a4a4a"/>
<stop offset="0.35" stop-color="#858585"/>
<stop offset="0.43" stop-color="#bebebe"/>
<stop offset="0.56" stop-color="#e0e0e0"/>
<stop offset="0.73" stop-color="#f3f3f3"/>
<stop offset="1" stop-color="#fcfcfc"/>
</radialGradient>
</defs>
<clipPath id="c1"><rect x="70.30" y="532.70" width="148.10" height="148.00"/></clipPath>
<g clip-path="url(#c1)">
<rect x="70" y="532" width="149" height="149" fill="#fcfcfc"/>
<ellipse cx="152.60" cy="618.60" rx="54" ry="49" fill="url(#gal)" transform="rotate(35 152.60 618.60)"/>
</g>
<rect x="94.70" y="557.80" width="98.90" height="98.20" fill="none" stroke="#ff0000" stroke-width="1.4"/>
<circle cx="120.60" cy="561.10" r="11.90" fill="none" stroke="#808080" stroke-width="0.9"/>
<circle cx="144.30" cy="553.20" r="11.90" fill="none" stroke="#808080" stroke-width="0.9"/>
<circle cx="144.30" cy="553.20" r="12.40" fill="none" stroke="#808080" stroke-width="2.0" stroke-dasharray="1.5 1.7" opacity="0.8"/>
<circle cx="137.00" cy="578.40" r="11.90" fill="none" stroke="#808080" stroke-width="0.9"/>
<circle cx="114.40" cy="583.40" r="11.90" fill="none" stroke="#808080" stroke-width="0.9"/>
<circle cx="161.40" cy="572.50" r="11.90" fill="none" stroke="#808080" stroke-width="0.9"/>
<circle cx="161.40" cy="572.50" r="12.40" fill="none" stroke="#808080" stroke-width="2.0" stroke-dasharray="1.5 1.7" opacity="0.8"/>
<circle cx="90.00" cy="590.10" r="11.90" fill="none" stroke="#808080" stroke-width="0.9"/>
<circle cx="90.00" cy="590.10" r="12.40" fill="none" stroke="#808080" stroke-width="2.0" stroke-dasharray="1.5 1.7" opacity="0.8"/>
<circle cx="178.70" cy="588.10" r="11.90" fill="none" stroke="#808080" stroke-width="0.9"/>
<circle cx="178.70" cy="588.10" r="12.40" fill="none" stroke="#808080" stroke-width="2.0" stroke-dasharray="1.5 1.7" opacity="0.8"/>
<circle cx="106.00" cy="608.30" r="11.90" fill="none" stroke="#808080" stroke-width="0.9"/>
<circle cx="106.00" cy="608.30" r="12.40" fill="none" stroke="#808080" stroke-width="2.0" stroke-dasharray="1.5 1.7" opacity="0.8"/>
<circle cx="130.80" cy="601.00" r="11.90" fill="none" stroke="#ffa500" stroke-width="1.0"/>
<circle cx="130.80" cy="601.00" r="12.50" fill="none" stroke="#ffa500" stroke-width="2.3" stroke-dasharray="1.7 1.7"/>
<circle cx="153.80" cy="593.80" r="11.90" fill="none" stroke="#00ff00" stroke-width="1.0"/>
<circle cx="153.80" cy="593.80" r="12.50" fill="none" stroke="#00ff00" stroke-width="2.3" stroke-dasharray="1.7 1.7"/>
<circle cx="124.80" cy="623.70" r="11.90" fill="none" stroke="#ff0000" stroke-width="1.0"/>
<circle cx="124.80" cy="623.70" r="12.50" fill="none" stroke="#ff0000" stroke-width="2.3" stroke-dasharray="1.7 1.7"/>
<circle cx="147.10" cy="618.20" r="11.90" fill="none" stroke="#0000ff" stroke-width="1.0"/>
<circle cx="147.10" cy="618.20" r="12.50" fill="none" stroke="#0000ff" stroke-width="2.3" stroke-dasharray="1.7 1.7"/>
<text class="s" x="144.20" y="546.30" fill="#ff0000" text-anchor="middle" style="font-size:10.2px" stroke="#ff0000" stroke-width="0.20">N</text>
<text class="s" x="80.20" y="610.20" fill="#ff0000" text-anchor="middle" style="font-size:10.2px" stroke="#ff0000" stroke-width="0.20">E</text>
<rect x="70.30" y="532.70" width="148.10" height="148.00" fill="none" stroke="#2e2e2e" stroke-width="1.25"/>
<line x1="78.90" y1="680.70" x2="78.90" y2="684.30" stroke="#222" stroke-width="1.1"/>
<text class="s" x="78.90" y="696.20" text-anchor="middle" style="font-size:10.9px" stroke="#000" stroke-width="0.22">−4</text>
<line x1="66.70" y1="671.80" x2="70.30" y2="671.80" stroke="#222" stroke-width="1.1"/>
<text class="s" x="63.70" y="675.90" text-anchor="end" style="font-size:10.9px" stroke="#000" stroke-width="0.22">−4</text>
<line x1="111.60" y1="680.70" x2="111.60" y2="684.30" stroke="#222" stroke-width="1.1"/>
<text class="s" x="111.60" y="696.20" text-anchor="middle" style="font-size:10.9px" stroke="#000" stroke-width="0.22">−2</text>
<line x1="66.70" y1="639.10" x2="70.30" y2="639.10" stroke="#222" stroke-width="1.1"/>
<text class="s" x="63.70" y="643.20" text-anchor="end" style="font-size:10.9px" stroke="#000" stroke-width="0.22">−2</text>
<line x1="144.30" y1="680.70" x2="144.30" y2="684.30" stroke="#222" stroke-width="1.1"/>
<text class="s" x="144.30" y="696.20" text-anchor="middle" style="font-size:10.9px" stroke="#000" stroke-width="0.22">0</text>
<line x1="66.70" y1="606.40" x2="70.30" y2="606.40" stroke="#222" stroke-width="1.1"/>
<text class="s" x="63.70" y="610.50" text-anchor="end" style="font-size:10.9px" stroke="#000" stroke-width="0.22">0</text>
<line x1="177.00" y1="680.70" x2="177.00" y2="684.30" stroke="#222" stroke-width="1.1"/>
<text class="s" x="177.00" y="696.20" text-anchor="middle" style="font-size:10.9px" stroke="#000" stroke-width="0.22">2</text>
<line x1="66.70" y1="573.70" x2="70.30" y2="573.70" stroke="#222" stroke-width="1.1"/>
<text class="s" x="63.70" y="577.80" text-anchor="end" style="font-size:10.9px" stroke="#000" stroke-width="0.22">2</text>
<line x1="209.70" y1="680.70" x2="209.70" y2="684.30" stroke="#222" stroke-width="1.1"/>
<text class="s" x="209.70" y="696.20" text-anchor="middle" style="font-size:10.9px" stroke="#000" stroke-width="0.22">4</text>
<line x1="66.70" y1="541.00" x2="70.30" y2="541.00" stroke="#222" stroke-width="1.1"/>
<text class="s" x="63.70" y="545.10" text-anchor="end" style="font-size:10.9px" stroke="#000" stroke-width="0.22">4</text>
<text class="s" x="144.30" y="526.00" text-anchor="middle" style="font-size:12.9px" stroke="#000" stroke-width="0.26">Fiber Positions</text>
<text class="s" x="144.30" y="707.00" text-anchor="middle" style="font-size:10.9px" stroke="#000" stroke-width="0.22">arcsecs</text>
<clipPath id="c2"><rect x="255.00" y="532.70" width="148.10" height="148.00"/></clipPath>
<filter id="mb" x="-10%" y="-10%" width="120%" height="120%"><feGaussianBlur stdDeviation="1.5"/></filter>
<clipPath id="c2v"><polygon points="250.0,528.0 377.2,528.0 376.9,532.7 374.0,546.0 370.6,561.0 367.6,575.0 365.1,587.1 360.1,587.1 360.1,590.2 357.0,590.2 357.0,594.0 353.0,594.0 353.0,597.1 348.0,597.1 348.0,605.0 341.6,605.0 341.6,611.4 335.1,611.4 335.1,618.6 330.9,618.6 330.9,617.1 326.6,617.1 326.6,619.3 316.9,619.3 316.9,622.1 313.0,622.1 295.0,617.8 275.0,613.0 250.0,607.0"/></clipPath>
<g clip-path="url(#c2)">
<rect x="255.00" y="532.70" width="148.2" height="148.2" fill="#414487"/>
<g clip-path="url(#c2v)">
<rect x="250" y="528" width="135" height="100" fill="#27808e"/>
<g filter="url(#mb)">
<polygon points="276.0,528.0 380.0,528.0 372.0,560.0 330.0,562.0 300.0,556.0 283.0,548.0" fill="#2e6f8e"/>
<polygon points="285.0,528.0 360.0,528.0 352.0,540.0 300.0,546.0" fill="#31688e"/>
<polygon points="250.0,586.0 272.0,584.0 280.0,598.0 282.0,616.0 250.0,610.0" fill="#2c738e"/>
<polygon points="268.0,528.0 280.0,528.0 281.0,545.0 279.0,565.0 276.0,586.0 268.0,590.0 250.0,592.0 250.0,528.0" fill="#3b518b"/>
<polygon points="250.0,528.0 271.0,528.0 273.5,542.0 272.0,563.6 269.5,583.0 250.0,587.0" fill="#440154"/>
<polygon points="279.0,540.0 288.0,538.0 289.0,560.0 286.0,580.0 284.0,600.0 286.0,616.0 277.0,614.0 279.0,590.0 280.0,565.0" fill="#1f9a8a"/>
<polygon points="282.5,546.0 285.5,546.0 286.0,562.0 284.5,578.0 282.5,578.0 283.0,562.0" fill="#3dbc74"/>
<polygon points="287.0,558.0 308.0,556.0 308.0,574.0 303.0,589.0 286.0,591.0 284.5,577.0" fill="#3e4989"/>
<polygon points="290.5,563.0 304.5,561.5 303.8,572.0 299.5,584.5 289.5,586.0 288.3,577.0" fill="#471365"/>
<polygon points="296.0,549.0 318.0,544.0 336.0,538.0 354.0,533.0 357.0,545.0 348.0,556.0 330.0,559.0 310.0,561.0 297.0,561.0" fill="#3f4788"/>
<polygon points="302.0,553.5 318.0,549.5 334.0,545.0 349.0,540.0 351.0,547.0 344.0,553.0 330.0,555.5 312.0,558.5 302.0,559.0" fill="#46085c"/>
<polygon points="310.0,560.0 372.0,556.0 366.0,588.0 340.0,575.0 318.0,566.0" fill="#1fa187"/>
<polygon points="311.0,563.0 330.0,564.0 364.0,581.0 364.0,590.0 313.0,624.0 280.0,617.0 281.0,604.0 297.0,593.0 306.0,580.0 310.0,570.0" fill="#2fb47c"/>
<polygon points="314.0,565.5 329.0,566.5 362.0,583.0 362.0,590.0 313.0,623.0 286.0,616.0 285.0,605.0 299.0,595.0 309.0,582.0 313.0,572.0" fill="#7ad151"/>
</g>
<g filter="url(#mb2)">
<polygon points="317.5,568.5 329.0,570.0 361.0,585.5 361.0,600.0 340.0,625.0 313.0,625.0 300.0,616.0 292.0,611.5 290.0,606.0 300.0,598.5 309.5,586.0 314.5,574.0" fill="#fde725"/>
</g>
</g>
<filter id="mb2" x="-10%" y="-10%" width="120%" height="120%"><feGaussianBlur stdDeviation="0.9"/></filter>
<polygon points="372.0,532.7 376.9,532.7 374.0,546.0 370.6,561.0 367.6,575.0 365.1,587.1 360.3,587.1 362.8,575.0 365.7,561.0 369.1,546.0" fill="#fde725"/>
<polygon points="372.0,532.7 376.9,532.7 376.2,536.0 371.3,536.0" fill="#86d549"/>
<rect x="348.1" y="596.9" width="3.9" height="3.9" fill="#440154"/>
</g>
<rect x="280.50" y="557.80" width="98.20" height="98.20" fill="none" stroke="#ff0000" stroke-width="1.4"/>
<path d="M292.00 606.40H322.10M336.90 606.40H366.80M329.50 569.60V599.70M329.50 614.00V643.80" stroke="#ff0000" stroke-width="1.4" fill="none"/>
<text class="s" x="329.00" y="546.30" fill="#ff0000" text-anchor="middle" style="font-size:10.2px" stroke="#ff0000" stroke-width="0.20">N</text>
<text class="s" x="264.90" y="610.20" fill="#ff0000" text-anchor="middle" style="font-size:10.2px" stroke="#ff0000" stroke-width="0.20">E</text>
<rect x="255.00" y="532.70" width="148.10" height="148.00" fill="none" stroke="#2e2e2e" stroke-width="1.25"/>
<line x1="263.60" y1="680.70" x2="263.60" y2="684.30" stroke="#222" stroke-width="1.1"/>
<text class="s" x="263.60" y="696.20" text-anchor="middle" style="font-size:10.9px" stroke="#000" stroke-width="0.22">−4</text>
<line x1="251.40" y1="671.80" x2="255.00" y2="671.80" stroke="#222" stroke-width="1.1"/>
<text class="s" x="248.40" y="675.90" text-anchor="end" style="font-size:10.9px" stroke="#000" stroke-width="0.22">−4</text>
<line x1="296.30" y1="680.70" x2="296.30" y2="684.30" stroke="#222" stroke-width="1.1"/>
<text class="s" x="296.30" y="696.20" text-anchor="middle" style="font-size:10.9px" stroke="#000" stroke-width="0.22">−2</text>
<line x1="251.40" y1="639.10" x2="255.00" y2="639.10" stroke="#222" stroke-width="1.1"/>
<text class="s" x="248.40" y="643.20" text-anchor="end" style="font-size:10.9px" stroke="#000" stroke-width="0.22">−2</text>
<line x1="329.00" y1="680.70" x2="329.00" y2="684.30" stroke="#222" stroke-width="1.1"/>
<text class="s" x="329.00" y="696.20" text-anchor="middle" style="font-size:10.9px" stroke="#000" stroke-width="0.22">0</text>
<line x1="251.40" y1="606.40" x2="255.00" y2="606.40" stroke="#222" stroke-width="1.1"/>
<text class="s" x="248.40" y="610.50" text-anchor="end" style="font-size:10.9px" stroke="#000" stroke-width="0.22">0</text>
<line x1="361.70" y1="680.70" x2="361.70" y2="684.30" stroke="#222" stroke-width="1.1"/>
<text class="s" x="361.70" y="696.20" text-anchor="middle" style="font-size:10.9px" stroke="#000" stroke-width="0.22">2</text>
<line x1="251.40" y1="573.70" x2="255.00" y2="573.70" stroke="#222" stroke-width="1.1"/>
<text class="s" x="248.40" y="577.80" text-anchor="end" style="font-size:10.9px" stroke="#000" stroke-width="0.22">2</text>
<line x1="394.40" y1="680.70" x2="394.40" y2="684.30" stroke="#222" stroke-width="1.1"/>
<text class="s" x="394.40" y="696.20" text-anchor="middle" style="font-size:10.9px" stroke="#000" stroke-width="0.22">4</text>
<line x1="251.40" y1="541.00" x2="255.00" y2="541.00" stroke="#222" stroke-width="1.1"/>
<text class="s" x="248.40" y="545.10" text-anchor="end" style="font-size:10.9px" stroke="#000" stroke-width="0.22">4</text>
<text class="s" x="329.00" y="526.00" text-anchor="middle" style="font-size:12.9px" stroke="#000" stroke-width="0.26">Lineflux Map</text>
<text class="s" x="329.00" y="707.00" text-anchor="middle" style="font-size:10.9px" stroke="#000" stroke-width="0.22">s/b: 4.25 +/- nan</text>
<clipPath id="c3"><rect x="440.80" y="532.70" width="148.10" height="148.00"/></clipPath>
<g clip-path="url(#c3)">
<rect x="440" y="532" width="149" height="149" fill="#fcfcfc"/>
<ellipse cx="524.80" cy="616.20" rx="52" ry="47" fill="url(#gal)" transform="rotate(30 524.80 616.20)"/>
</g>
<rect x="465.40" y="557.80" width="98.80" height="98.20" fill="none" stroke="#ff0000" stroke-width="1.4"/>
<ellipse cx="526.1" cy="615.7" rx="54.8" ry="50.4" fill="none" stroke="#ffd700" stroke-width="1.2" transform="rotate(-8 526.1 615.7)"/>
<path d="M477.30 606.40H507.40M522.20 606.40H552.10M514.80 569.60V599.70M514.80 614.00V643.80" stroke="#ff0000" stroke-width="1.4" fill="none"/>
<rect x="517.5" y="608.2" width="13.4" height="13.0" fill="none" stroke="#0000ff" stroke-width="1.0"/>
<text class="s" x="514.50" y="546.30" fill="#ff0000" text-anchor="middle" style="font-size:10.2px" stroke="#ff0000" stroke-width="0.20">N</text>
<text class="s" x="450.80" y="610.20" fill="#ff0000" text-anchor="middle" style="font-size:10.2px" stroke="#ff0000" stroke-width="0.20">E</text>
<rect x="440.80" y="532.70" width="148.10" height="148.00" fill="none" stroke="#2e2e2e" stroke-width="1.25"/>
<line x1="449.40" y1="680.70" x2="449.40" y2="684.30" stroke="#222" stroke-width="1.1"/>
<text class="s" x="449.40" y="696.20" text-anchor="middle" style="font-size:10.9px" stroke="#000" stroke-width="0.22">−4</text>
<line x1="437.20" y1="671.80" x2="440.80" y2="671.80" stroke="#222" stroke-width="1.1"/>
<text class="s" x="434.20" y="675.90" text-anchor="end" style="font-size:10.9px" stroke="#000" stroke-width="0.22">−4</text>
<line x1="482.10" y1="680.70" x2="482.10" y2="684.30" stroke="#222" stroke-width="1.1"/>
<text class="s" x="482.10" y="696.20" text-anchor="middle" style="font-size:10.9px" stroke="#000" stroke-width="0.22">−2</text>
<line x1="437.20" y1="639.10" x2="440.80" y2="639.10" stroke="#222" stroke-width="1.1"/>
<text class="s" x="434.20" y="643.20" text-anchor="end" style="font-size:10.9px" stroke="#000" stroke-width="0.22">−2</text>
<line x1="514.80" y1="680.70" x2="514.80" y2="684.30" stroke="#222" stroke-width="1.1"/>
<text class="s" x="514.80" y="696.20" text-anchor="middle" style="font-size:10.9px" stroke="#000" stroke-width="0.22">0</text>
<line x1="437.20" y1="606.40" x2="440.80" y2="606.40" stroke="#222" stroke-width="1.1"/>
<text class="s" x="434.20" y="610.50" text-anchor="end" style="font-size:10.9px" stroke="#000" stroke-width="0.22">0</text>
<line x1="547.50" y1="680.70" x2="547.50" y2="684.30" stroke="#222" stroke-width="1.1"/>
<text class="s" x="547.50" y="696.20" text-anchor="middle" style="font-size:10.9px" stroke="#000" stroke-width="0.22">2</text>
<line x1="437.20" y1="573.70" x2="440.80" y2="573.70" stroke="#222" stroke-width="1.1"/>
<text class="s" x="434.20" y="577.80" text-anchor="end" style="font-size:10.9px" stroke="#000" stroke-width="0.22">2</text>
<line x1="580.20" y1="680.70" x2="580.20" y2="684.30" stroke="#222" stroke-width="1.1"/>
<text class="s" x="580.20" y="696.20" text-anchor="middle" style="font-size:10.9px" stroke="#000" stroke-width="0.22">4</text>
<line x1="437.20" y1="541.00" x2="440.80" y2="541.00" stroke="#222" stroke-width="1.1"/>
<text class="s" x="434.20" y="545.10" text-anchor="end" style="font-size:10.9px" stroke="#000" stroke-width="0.22">4</text>
<text class="s" x="514.80" y="526.00" text-anchor="middle" style="font-size:12.9px" stroke="#000" stroke-width="0.26">HSC(26.2) r</text>
<text class="s" x="514.40" y="707.00" text-anchor="middle" style="font-size:10.9px" stroke="#000" stroke-width="0.22">m:17.9  re:3.2"  s:0.9"</text>
<text class="s" x="516.10" y="719.10" text-anchor="middle" style="font-size:10.9px" stroke="#000" stroke-width="0.22">EWr: 0, PLAE: 0.067</text>
<text class="m" x="70.00" y="786.20" stroke="#000" stroke-width="0.26">Separation</text>
<text class="m" x="70.00" y="800.80" stroke="#000" stroke-width="0.26">Match score</text>
<text class="m" x="70.00" y="815.50" stroke="#000" stroke-width="0.26">RA, Dec</text>
<text class="m" x="70.00" y="830.10" stroke="#000" stroke-width="0.26">Spec z</text>
<text class="m" x="70.00" y="844.60" stroke="#000" stroke-width="0.26">Photo z</text>
<text class="m" x="70.00" y="859.20" stroke="#000" stroke-width="0.26">Est LyA rest-EW</text>
<text class="m" x="70.00" y="873.90" stroke="#000" stroke-width="0.26">mag</text>
<text class="m" x="70.00" y="888.80" stroke="#000" stroke-width="0.26">P(LAE)/P(OII)</text>
<text class="m" x="286.70" y="779.10" fill="#0000ff" stroke="#0000ff" stroke-width="0.26">0.761081"</text>
<text class="m" x="286.70" y="793.80" fill="#0000ff" stroke="#0000ff" stroke-width="0.26">1.000</text>
<text class="m" x="286.70" y="808.30" fill="#0000ff" stroke="#0000ff" stroke-width="0.26">178.347305, 48.832428</text>
<text class="m" x="286.70" y="822.90" fill="#0000ff" stroke="#0000ff" stroke-width="0.26">N/A</text>
<text class="m" x="286.70" y="837.60" fill="#0000ff" stroke="#0000ff" stroke-width="0.26">N/A</text>
<text><tspan class="m" x="286.70" y="854.30" fill="#0000ff" stroke="#0000ff" stroke-width="0.26">0.27(</tspan><tspan class="s" x="325.98" y="854.30" fill="#0000ff" stroke="#0000ff" stroke-width="0.26">±</tspan><tspan class="m" x="336.88" y="854.30" fill="#0000ff" stroke="#0000ff" stroke-width="0.26">0.09)</tspan><tspan class="s i" x="375.60" y="854.30" fill="#0000ff" stroke="#0000ff" stroke-width="0.26">Å</tspan></text>
<text class="m" x="286.70" y="869.80" fill="#0000ff" stroke="#0000ff" stroke-width="0.26">18.03(17.87,18.23)R</text>
<text><tspan class="s" x="287.00" y="886.40" fill="#0000ff" stroke="#0000ff" stroke-width="0.26">0.067</tspan><tspan class="s" x="328.60" y="881.40" fill="#0000ff" style="font-size:9.1px" stroke="#0000ff" stroke-width="0.18">0.153 </tspan><tspan class="s" x="328.60" y="889.60" fill="#0000ff" style="font-size:9.1px" stroke="#0000ff" stroke-width="0.18">0.036</tspan></text>
<text class="m" x="938.50" y="821.50" stroke="#000" stroke-width="0.26">Phot z plot not available.</text>
</svg>
</body></html>
